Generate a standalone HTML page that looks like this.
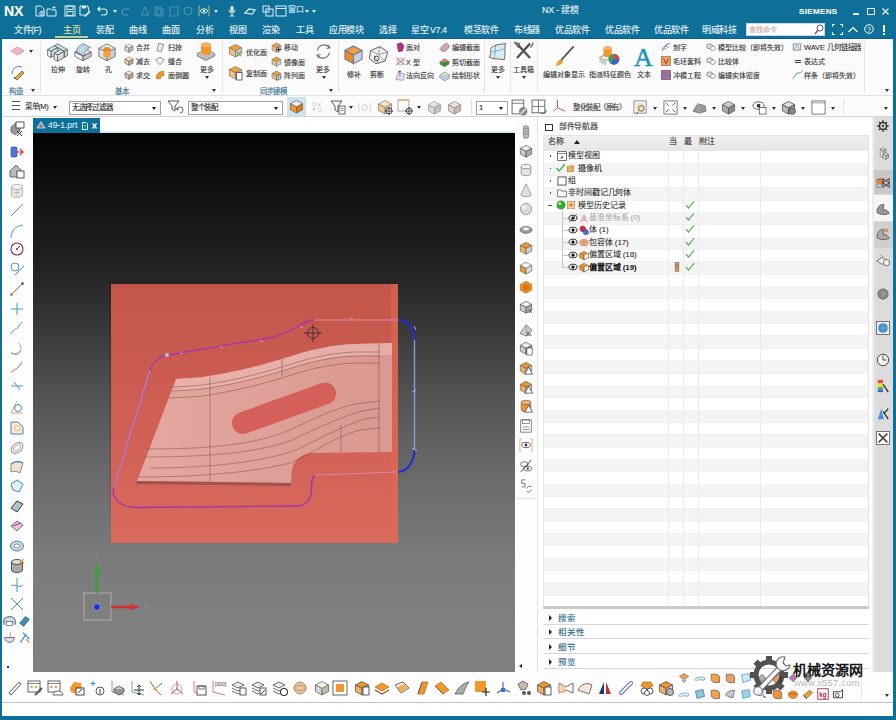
<!DOCTYPE html>
<html lang="zh-CN"><head><meta charset="utf-8">
<style>
*{margin:0;padding:0;box-sizing:border-box}
html,body{width:896px;height:720px;overflow:hidden;background:#fff;font-family:"Liberation Sans",sans-serif;position:relative}
.a{position:absolute}
.t{white-space:nowrap;-webkit-text-stroke:.12px currentColor}
svg{position:absolute;overflow:visible}
</style></head><body>
<div class="a" style="left:0px;top:0px;width:896px;height:39px;background:#0e6f98;"></div>
<div class="a" style="left:0px;top:38px;width:896px;height:1px;background:#0b6088;"></div>
<div class="a t" style="left:4px;top:3px;font-size:14px;line-height:16px;color:#fff;font-weight:bold">NX</div>
<svg style="left:34px;top:5px;opacity:1" width="12" height="12" viewBox="0 0 12 12"><path d="M2 1h5l3 3v7H2z" fill="none" stroke="#dceef6" stroke-width="1"/><circle cx="8" cy="8.5" r="2.3" fill="#0e6f98" stroke="#dceef6"/><path d="M8 7v3M6.8 8.5h2.4" stroke="#dceef6" stroke-width=".8"/></svg>
<svg style="left:46px;top:5px;opacity:1" width="12" height="12" viewBox="0 0 12 12"><path d="M1 4h4l1 1h4v6H1z" fill="none" stroke="#dceef6"/><path d="M8 1v3M6.5 2.5h3" stroke="#dceef6"/></svg>
<svg style="left:64px;top:5px;opacity:1" width="12" height="12" viewBox="0 0 12 12"><rect x="1" y="1" width="10" height="10" fill="none" stroke="#dceef6"/><rect x="3" y="1" width="6" height="3.5" fill="none" stroke="#dceef6"/><rect x="3" y="6.5" width="6" height="4" fill="none" stroke="#dceef6"/></svg>
<svg style="left:79px;top:5px;opacity:1" width="12" height="12" viewBox="0 0 12 12"><path d="M1 1h7l1.5 1.5V6M6 10H1V1" fill="none" stroke="#dceef6" stroke-width="1.1"/><rect x="3" y="1" width="4" height="2.5" fill="#dceef6"/><path d="M5.5 10.5l5-5 1.2 1.2-5 5H5.5z" fill="#dceef6"/></svg>
<svg style="left:96px;top:5px;opacity:1" width="12" height="12" viewBox="0 0 12 12"><path d="M3 4h5a3 3 0 0 1 0 6H5" fill="none" stroke="#dceef6" stroke-width="1.1"/><path d="M1 4l3-3v6z" fill="#dceef6"/></svg>
<div class="a" style="left:113px;top:10px;width:0;height:0;border-left:2px solid transparent;border-right:2px solid transparent;border-top:3px solid #dceef6"></div>
<svg style="left:121px;top:5px;opacity:0.35" width="12" height="12" viewBox="0 0 12 12"><path d="M9 4H4a3 3 0 0 0 0 6h3" fill="none" stroke="#dceef6" stroke-width="1"/></svg>
<svg style="left:139px;top:5px;opacity:0.3" width="12" height="12" viewBox="0 0 12 12"><path d="M2 10l4-8 4 8z" fill="none" stroke="#dceef6"/></svg>
<svg style="left:153px;top:5px;opacity:0.3" width="12" height="12" viewBox="0 0 12 12"><rect x="2" y="2" width="6" height="8" fill="none" stroke="#dceef6"/><rect x="4" y="4" width="6" height="7" fill="none" stroke="#dceef6"/></svg>
<svg style="left:168px;top:5px;opacity:0.3" width="12" height="12" viewBox="0 0 12 12"><rect x="2" y="2" width="8" height="9" fill="none" stroke="#dceef6"/></svg>
<svg style="left:182px;top:5px;opacity:0.3" width="12" height="12" viewBox="0 0 12 12"><circle cx="6" cy="6" r="4" fill="none" stroke="#dceef6"/></svg>
<svg style="left:198px;top:5px;opacity:1" width="12" height="12" viewBox="0 0 12 12"><path d="M2 1H1v10h1M10 1h1v10h-1" fill="none" stroke="#c8b060"/><ellipse cx="6" cy="6" rx="3.5" ry="2.2" fill="none" stroke="#dceef6"/><circle cx="6" cy="6" r="1.2" fill="#dceef6"/></svg>
<div class="a" style="left:214px;top:10px;width:0;height:0;border-left:2px solid transparent;border-right:2px solid transparent;border-top:3px solid #dceef6"></div>
<svg style="left:226px;top:5px;opacity:1" width="12" height="12" viewBox="0 0 12 12"><rect x="4.5" y="1" width="3" height="6" rx="1.5" fill="#dceef6"/><path d="M3 5a3 3 0 0 0 6 0M6 8v3M4 11h4" fill="none" stroke="#dceef6"/></svg>
<svg style="left:244px;top:5px;opacity:1" width="12" height="12" viewBox="0 0 12 12"><path d="M1 8l4-4 6 1-3 4z" fill="none" stroke="#dceef6" stroke-width="1.2"/></svg>
<svg style="left:262px;top:5px;opacity:1" width="12" height="12" viewBox="0 0 12 12"><rect x="1" y="1" width="6" height="6" fill="none" stroke="#dceef6"/><rect x="4" y="4" width="7" height="7" fill="none" stroke="#dceef6"/></svg>
<svg style="left:275px;top:5px;opacity:1" width="12" height="12" viewBox="0 0 12 12"><rect x="1" y="1" width="10" height="10" fill="none" stroke="#dceef6"/><path d="M1 3.5h10" stroke="#dceef6"/></svg>
<div class="a t" style="left:288px;top:5px;font-size:8px;line-height:10px;color:#dceef6;letter-spacing:-0.5px">窗口</div>
<div class="a" style="left:305px;top:10px;width:0;height:0;border-left:2px solid transparent;border-right:2px solid transparent;border-top:3px solid #dceef6"></div>
<div class="a" style="left:312px;top:10px;width:0;height:0;border-left:2px solid transparent;border-right:2px solid transparent;border-top:3px solid #dceef6"></div>
<div class="a t" style="left:542px;top:5px;font-size:9px;line-height:11px;color:#e6f0f5;letter-spacing:-0.3px">NX - 建模</div>
<div class="a t" style="left:799px;top:6.5px;font-size:8px;line-height:10px;color:#f4f8fa;font-weight:bold;letter-spacing:0.35px">SIEMENS</div>
<div class="a" style="left:853px;top:13px;width:6px;height:1.6px;background:#eef;"></div>
<div class="a" style="left:867px;top:8px;width:8px;height:7px;border:1.2px solid #eef"></div>
<svg style="left:882px;top:8px" width="7" height="7" viewBox="0 0 7 7"><path d="M0.5 0.5L6.5 6.5M6.5 0.5L0.5 6.5" stroke="#eef" stroke-width="1.3"/></svg>
<div class="a t" style="left:14px;top:25px;font-size:9px;line-height:11px;color:#e8f2f7;letter-spacing:-0.5px">文件(F)</div>
<div class="a t" style="left:63px;top:25px;font-size:9px;line-height:11px;color:#e3e39a;letter-spacing:-0.5px">主页</div>
<div class="a t" style="left:96px;top:25px;font-size:9px;line-height:11px;color:#e8f2f7;letter-spacing:-0.5px">装配</div>
<div class="a t" style="left:129px;top:25px;font-size:9px;line-height:11px;color:#e8f2f7;letter-spacing:-0.5px">曲线</div>
<div class="a t" style="left:162px;top:25px;font-size:9px;line-height:11px;color:#e8f2f7;letter-spacing:-0.5px">曲面</div>
<div class="a t" style="left:196px;top:25px;font-size:9px;line-height:11px;color:#e8f2f7;letter-spacing:-0.5px">分析</div>
<div class="a t" style="left:229px;top:25px;font-size:9px;line-height:11px;color:#e8f2f7;letter-spacing:-0.5px">视图</div>
<div class="a t" style="left:262px;top:25px;font-size:9px;line-height:11px;color:#e8f2f7;letter-spacing:-0.5px">渲染</div>
<div class="a t" style="left:296px;top:25px;font-size:9px;line-height:11px;color:#e8f2f7;letter-spacing:-0.5px">工具</div>
<div class="a t" style="left:329px;top:25px;font-size:9px;line-height:11px;color:#e8f2f7;letter-spacing:-0.5px">应用模块</div>
<div class="a t" style="left:379px;top:25px;font-size:9px;line-height:11px;color:#e8f2f7;letter-spacing:-0.5px">选择</div>
<div class="a t" style="left:411px;top:25px;font-size:9px;line-height:11px;color:#e8f2f7;letter-spacing:-0.5px">星空 V7.4</div>
<div class="a t" style="left:464px;top:25px;font-size:9px;line-height:11px;color:#e8f2f7;letter-spacing:-0.5px">模茎软件</div>
<div class="a t" style="left:514px;top:25px;font-size:9px;line-height:11px;color:#e8f2f7;letter-spacing:-0.5px">布线器</div>
<div class="a t" style="left:555px;top:25px;font-size:9px;line-height:11px;color:#e8f2f7;letter-spacing:-0.5px">优品软件</div>
<div class="a t" style="left:605px;top:25px;font-size:9px;line-height:11px;color:#e8f2f7;letter-spacing:-0.5px">优品软件</div>
<div class="a t" style="left:654px;top:25px;font-size:9px;line-height:11px;color:#e8f2f7;letter-spacing:-0.5px">优品软件</div>
<div class="a t" style="left:702px;top:25px;font-size:9px;line-height:11px;color:#e8f2f7;letter-spacing:-0.5px">明威科技</div>
<div class="a" style="left:55px;top:36px;width:33px;height:2px;background:#bccf9a;"></div>
<div class="a" style="left:746px;top:23px;width:79px;height:13px;background:#fff;border:1px solid #cfd8dc"></div>
<div class="a t" style="left:749px;top:25px;font-size:7px;line-height:9px;color:#c9aaa0;">查找命令</div>
<svg style="left:814px;top:24px" width="10" height="11" viewBox="0 0 10 11"><circle cx="6" cy="4" r="3" fill="none" stroke="#555" stroke-width="1"/><path d="M4 6L1 10" stroke="#a05050" stroke-width="1.5"/></svg>
<svg style="left:832px;top:24px" width="11" height="11" viewBox="0 0 11 11"><path d="M0.5 3V0.5H3M8 0.5h2.5V3M10.5 8v2.5H8M3 10.5H0.5V8" fill="none" stroke="#dff" stroke-width="1.1"/></svg>
<svg style="left:848px;top:26px" width="10" height="7" viewBox="0 0 10 7"><path d="M0.5 6L5 1.5 9.5 6" fill="none" stroke="#fff" stroke-width="1.2"/></svg>
<svg style="left:864px;top:24px" width="10" height="10" viewBox="0 0 10 10"><circle cx="5" cy="5" r="4.3" fill="none" stroke="#fff" stroke-width="1"/><text x="5" y="8" font-size="7" text-anchor="middle" fill="#fff" font-family="Liberation Sans">?</text></svg>
<div class="a" style="left:883px;top:25px;width:1.6px;height:7px;background:#fff;"></div>
<div class="a" style="left:883px;top:33px;width:1.6px;height:1.6px;background:#fff;"></div>
<div class="a" style="left:2px;top:39px;width:891px;height:57px;background:#fbfbfb;"></div>
<div class="a" style="left:2px;top:95px;width:891px;height:1px;background:#e0e0e0;"></div>
<div class="a" style="left:40px;top:41px;width:1px;height:52px;background:#e4e4e4;"></div>
<div class="a" style="left:222px;top:41px;width:1px;height:52px;background:#e4e4e4;"></div>
<div class="a" style="left:338px;top:41px;width:1px;height:52px;background:#e4e4e4;"></div>
<div class="a" style="left:484px;top:41px;width:1px;height:52px;background:#e4e4e4;"></div>
<div class="a" style="left:510px;top:41px;width:1px;height:52px;background:#e4e4e4;"></div>
<div class="a" style="left:537px;top:41px;width:1px;height:52px;background:#e4e4e4;"></div>
<div class="a" style="left:864px;top:41px;width:1px;height:52px;background:#e4e4e4;"></div>
<svg style="left:10px;top:46px" width="15" height="10" viewBox="0 0 15 10"><path d="M1 5L7.5 1 14 5 7.5 9z" fill="#f2b5c8" stroke="#d48aa0" stroke-width=".8"/></svg>
<div class="a" style="left:29px;top:50px;width:0;height:0;border-left:2px solid transparent;border-right:2px solid transparent;border-top:3px solid #333"></div>
<svg style="left:10px;top:64px" width="15" height="16" viewBox="0 0 15 16"><path d="M2 10A7 7 0 0 1 12 3" fill="none" stroke="#3a8fb5" stroke-width="1"/><path d="M5 14l7-7 2 2-7 7z" fill="#f5a623" stroke="#555" stroke-width=".7"/><path d="M4 13l1.5 2" stroke="#333"/></svg>
<div class="a t" style="left:9px;top:87px;font-size:7.5px;line-height:9.5px;color:#2d6f92;">构造</div>
<div class="a" style="left:31px;top:89px;width:0;height:0;border-left:2px solid transparent;border-right:2px solid transparent;border-top:3px solid #333"></div>
<svg style="left:47px;top:42px" width="21" height="21" viewBox="0 0 16 16"><polygon points="8.00,1.36 15.53,5.71 13.02,7.16 5.49,2.81" fill="#c8e6ef" stroke="#555" stroke-width="0.6" stroke-linejoin="round"/><polygon points="15.53,5.71 13.02,7.16 13.02,11.80 15.53,10.35" fill="#d4dadd" stroke="#555" stroke-width="0.6" stroke-linejoin="round"/><polygon points="5.49,2.81 13.02,7.16 13.02,11.80 5.49,7.45" fill="#f2f5f6" stroke="#555" stroke-width="0.6" stroke-linejoin="round"/><polygon points="5.49,2.81 8.00,4.26 2.98,7.16 0.47,5.71" fill="#c8e6ef" stroke="#555" stroke-width="0.6" stroke-linejoin="round"/><polygon points="8.00,4.26 2.98,7.16 2.98,11.80 8.00,8.90" fill="#d4dadd" stroke="#555" stroke-width="0.6" stroke-linejoin="round"/><polygon points="0.47,5.71 2.98,7.16 2.98,11.80 0.47,10.35" fill="#f2f5f6" stroke="#555" stroke-width="0.6" stroke-linejoin="round"/><polygon points="10.51,5.71 13.02,7.16 8.00,10.06 5.49,8.61" fill="#c8e6ef" stroke="#555" stroke-width="0.6" stroke-linejoin="round"/><polygon points="13.02,7.16 8.00,10.06 8.00,14.70 13.02,11.80" fill="#d4dadd" stroke="#555" stroke-width="0.6" stroke-linejoin="round"/><polygon points="5.49,8.61 8.00,10.06 8.00,14.70 5.49,13.25" fill="#f2f5f6" stroke="#555" stroke-width="0.6" stroke-linejoin="round"/></svg>
<div class="a t" style="left:51px;top:65px;font-size:7px;line-height:9px;color:#333;letter-spacing:0px">拉伸</div>
<svg style="left:73px;top:42px" width="20" height="20" viewBox="0 0 16 16"><path d="M1.5 8 L8 4.5 L14.5 8 L8 11.5Z" fill="#e8e8e8" stroke="#555" stroke-width=".6"/><path d="M1.5 8V11.5L8 15V11.5z" fill="#f4f4f4" stroke="#555" stroke-width=".6"/><path d="M14.5 8V11.5L8 15V11.5z" fill="#c8c8c8" stroke="#555" stroke-width=".6"/><path d="M3 8 C3 4 6 2 8.5 1.5 L14 4.5 C11.5 5 9 7 9 11 z" fill="#cfe8f0" stroke="#557" stroke-width=".6"/><path d="M5 7C5 5 7 3.5 9.5 3M7 9C7 6.5 9 5 11.5 4.3" fill="none" stroke="#6ab" stroke-width=".6"/></svg>
<div class="a t" style="left:76px;top:65px;font-size:7px;line-height:9px;color:#333;letter-spacing:0px">旋转</div>
<svg style="left:97px;top:42px" width="20" height="20" viewBox="0 0 16 16"><path d="M8 1.5 L14.5 5 L8 8.5 L1.5 5Z" fill="#eef3f5" stroke="#777" stroke-width=".8"/><path d="M1.5 5 L8 8.5 L8 15 L1.5 11.5Z" fill="#dfe7ea" stroke="#777" stroke-width=".8"/><path d="M14.5 5 L8 8.5 L8 15 L14.5 11.5Z" fill="#c9d2d6" stroke="#777" stroke-width=".8"/><path d="M5 5.5V11A3 1.6 0 0 0 11 11V5.5" fill="#f0a050"/><ellipse cx="8" cy="5.5" rx="3" ry="1.6" fill="#e58a20"/></svg>
<div class="a t" style="left:105px;top:65px;font-size:7px;line-height:9px;color:#333;letter-spacing:0px">孔</div>
<svg style="left:124px;top:43px" width="10" height="10" viewBox="0 0 16 16"><path d="M8 1.5 L14.5 5 L8 8.5 L1.5 5Z" fill="#f0f0f0" stroke="#555" stroke-width=".8"/><path d="M1.5 5 L8 8.5 L8 15 L1.5 11.5Z" fill="#ddd" stroke="#555" stroke-width=".8"/><path d="M14.5 5 L8 8.5 L8 15 L14.5 11.5Z" fill="#bbb" stroke="#555" stroke-width=".8"/></svg>
<div class="a t" style="left:136px;top:43px;font-size:7px;line-height:9px;color:#333;letter-spacing:0px">合并</div>
<svg style="left:124px;top:56px" width="10" height="10" viewBox="0 0 16 16"><path d="M8 1.5 L14.5 5 L8 8.5 L1.5 5Z" fill="#f7e8d8" stroke="#555" stroke-width=".8"/><path d="M1.5 5 L8 8.5 L8 15 L1.5 11.5Z" fill="#e8c9a8" stroke="#555" stroke-width=".8"/><path d="M14.5 5 L8 8.5 L8 15 L14.5 11.5Z" fill="#c9a080" stroke="#555" stroke-width=".8"/></svg>
<div class="a t" style="left:136px;top:57px;font-size:7px;line-height:9px;color:#333;letter-spacing:0px">减去</div>
<svg style="left:124px;top:70px" width="10" height="10" viewBox="0 0 16 16"><path d="M8 1.5 L14.5 5 L8 8.5 L1.5 5Z" fill="#f5e6dc" stroke="#555" stroke-width=".8"/><path d="M1.5 5 L8 8.5 L8 15 L1.5 11.5Z" fill="#e0c0b0" stroke="#555" stroke-width=".8"/><path d="M14.5 5 L8 8.5 L8 15 L14.5 11.5Z" fill="#c8a090" stroke="#555" stroke-width=".8"/></svg>
<div class="a t" style="left:136px;top:71px;font-size:7px;line-height:9px;color:#333;letter-spacing:0px">求交</div>
<svg style="left:155px;top:42px" width="10" height="10" viewBox="0 0 16 16"><path d="M3 14L6 2 14 4 10 15z" fill="#e4f0f5" stroke="#557" stroke-width="1"/></svg>
<div class="a t" style="left:168px;top:43px;font-size:7px;line-height:9px;color:#333;letter-spacing:0px">扫掠</div>
<svg style="left:155px;top:56px" width="10" height="10" viewBox="0 0 16 16"><path d="M1 6L8 2 15 6 8 14z" fill="#f4f4f4" stroke="#555" stroke-width="1"/></svg>
<div class="a t" style="left:168px;top:57px;font-size:7px;line-height:9px;color:#333;letter-spacing:0px">缝合</div>
<svg style="left:155px;top:70px" width="10" height="10" viewBox="0 0 16 16"><path d="M2 14C2 6 6 2 14 2V9C10 9 9 11 9 14z" fill="#f0962a" stroke="#a05a10" stroke-width=".8"/></svg>
<div class="a t" style="left:168px;top:71px;font-size:7px;line-height:9px;color:#333;letter-spacing:0px">面倒圆</div>
<svg style="left:196px;top:41px" width="20" height="20" viewBox="0 0 16 16"><path d="M1 10L8 6.5 15 10 8 13.5z" fill="#e0e0e0" stroke="#666" stroke-width=".6"/><path d="M1 10V12L8 15.5 15 12V10" fill="#bbb" stroke="#666" stroke-width=".6"/><path d="M4 3V9A4 2 0 0 0 12 9V3" fill="#f0962a"/><ellipse cx="8" cy="3" rx="4" ry="2" fill="#f7b060"/></svg>
<div class="a t" style="left:200px;top:65px;font-size:7px;line-height:9px;color:#333;letter-spacing:0px">更多</div>
<div class="a" style="left:205px;top:76px;width:0;height:0;border-left:2px solid transparent;border-right:2px solid transparent;border-top:3px solid #333"></div>
<div class="a t" style="left:115px;top:87px;font-size:7.5px;line-height:9.5px;color:#2d6f92;">基本</div>
<div class="a" style="left:212px;top:89px;width:0;height:0;border-left:2px solid transparent;border-right:2px solid transparent;border-top:3px solid #333"></div>
<svg style="left:228px;top:43px" width="15" height="15" viewBox="0 0 16 16"><path d="M8 1.5 L14.5 5 L8 8.5 L1.5 5Z" fill="#f5a030" stroke="#777" stroke-width=".8"/><path d="M1.5 5 L8 8.5 L8 15 L1.5 11.5Z" fill="#f0c080" stroke="#777" stroke-width=".8"/><path d="M14.5 5 L8 8.5 L8 15 L14.5 11.5Z" fill="#d0d0e0" stroke="#777" stroke-width=".8"/><path d="M9 9l5 5M14 9l-5 5" stroke="#6a4" stroke-width="1.2"/></svg>
<div class="a t" style="left:246px;top:48px;font-size:7px;line-height:9px;color:#333;letter-spacing:0px">优化面</div>
<svg style="left:228px;top:65px" width="15" height="15" viewBox="0 0 16 16"><path d="M8 1.5 L14.5 5 L8 8.5 L1.5 5Z" fill="#f5a030" stroke="#777" stroke-width=".8"/><path d="M1.5 5 L8 8.5 L8 15 L1.5 11.5Z" fill="#f0c080" stroke="#777" stroke-width=".8"/><path d="M14.5 5 L8 8.5 L8 15 L14.5 11.5Z" fill="#d0d0e0" stroke="#777" stroke-width=".8"/><path d="M9 8h6v8H9z" fill="#fff" stroke="#333" stroke-width=".8"/></svg>
<div class="a t" style="left:246px;top:69px;font-size:7px;line-height:9px;color:#333;letter-spacing:0px">复制面</div>
<svg style="left:271px;top:42px" width="11" height="11" viewBox="0 0 16 16"><path d="M8 1.5 L14.5 5 L8 8.5 L1.5 5Z" fill="#f5a030" stroke="#666" stroke-width=".8"/><path d="M1.5 5 L8 8.5 L8 15 L1.5 11.5Z" fill="#f0c080" stroke="#666" stroke-width=".8"/><path d="M14.5 5 L8 8.5 L8 15 L14.5 11.5Z" fill="#d0d0d0" stroke="#666" stroke-width=".8"/><path d="M11 7v8M7 11h8" stroke="#333" stroke-width="1.4"/></svg>
<div class="a t" style="left:284px;top:43px;font-size:7px;line-height:9px;color:#333;letter-spacing:0px">移动</div>
<svg style="left:271px;top:56px" width="11" height="11" viewBox="0 0 16 16"><path d="M8 1.5 L14.5 5 L8 8.5 L1.5 5Z" fill="#f5a030" stroke="#666" stroke-width=".8"/><path d="M1.5 5 L8 8.5 L8 15 L1.5 11.5Z" fill="#f0c080" stroke="#666" stroke-width=".8"/><path d="M14.5 5 L8 8.5 L8 15 L14.5 11.5Z" fill="#d0d0d0" stroke="#666" stroke-width=".8"/></svg>
<div class="a t" style="left:284px;top:58px;font-size:7px;line-height:9px;color:#333;letter-spacing:0px">镜像面</div>
<svg style="left:271px;top:70px" width="11" height="11" viewBox="0 0 16 16"><path d="M8 1.5 L14.5 5 L8 8.5 L1.5 5Z" fill="#f5a030" stroke="#666" stroke-width=".8"/><path d="M1.5 5 L8 8.5 L8 15 L1.5 11.5Z" fill="#f0c080" stroke="#666" stroke-width=".8"/><path d="M14.5 5 L8 8.5 L8 15 L14.5 11.5Z" fill="#d0d0d0" stroke="#666" stroke-width=".8"/><circle cx="11" cy="11" r="3.5" fill="#fff" stroke="#333" stroke-width=".8"/><path d="M11 7.5v7M7.5 11h7" stroke="#333" stroke-width=".6"/></svg>
<div class="a t" style="left:284px;top:71px;font-size:7px;line-height:9px;color:#333;letter-spacing:0px">阵列面</div>
<svg style="left:314px;top:42px" width="19" height="19" viewBox="0 0 16 16"><path d="M3 7A5.5 5.5 0 0 1 13 5" fill="none" stroke="#777" stroke-width="1"/><path d="M13 9A5.5 5.5 0 0 1 3 11" fill="none" stroke="#777" stroke-width="1"/><path d="M11.5 2.5l2 2.5-3 .5M4.5 13.5l-2-2.5 3-.5" fill="none" stroke="#777" stroke-width="1"/></svg>
<div class="a t" style="left:316px;top:65px;font-size:7px;line-height:9px;color:#333;letter-spacing:0px">更多</div>
<div class="a" style="left:322px;top:76px;width:0;height:0;border-left:2px solid transparent;border-right:2px solid transparent;border-top:3px solid #333"></div>
<div class="a t" style="left:260px;top:87px;font-size:7.5px;line-height:9.5px;color:#2d6f92;letter-spacing:-0.3px">同步建模</div>
<div class="a" style="left:329px;top:89px;width:0;height:0;border-left:2px solid transparent;border-right:2px solid transparent;border-top:3px solid #333"></div>
<svg style="left:343px;top:44px" width="21" height="21" viewBox="0 0 16 16"><path d="M8 1.5 L14.5 5 L8 8.5 L1.5 5Z" fill="#f5a040" stroke="#6a7a9a" stroke-width=".8"/><path d="M1.5 5 L8 8.5 L8 15 L1.5 11.5Z" fill="#ec8a20" stroke="#6a7a9a" stroke-width=".8"/><path d="M14.5 5 L8 8.5 L8 15 L14.5 11.5Z" fill="#c8d0e8" stroke="#6a7a9a" stroke-width=".8"/></svg>
<div class="a t" style="left:347px;top:70px;font-size:7px;line-height:9px;color:#333;letter-spacing:0px">修补</div>
<svg style="left:368px;top:44px" width="21" height="21" viewBox="0 0 16 16"><path d="M2 5L9 2 15 6 13 13 6 15 1 11z" fill="#f2f2f2" stroke="#555" stroke-width=".7"/><path d="M2 5L8 8 13 13M8 8L15 6M5 9l3 6M9 2l-1 6" fill="none" stroke="#777" stroke-width=".5"/><circle cx="6.5" cy="11" r="1.8" fill="none" stroke="#333" stroke-width=".7"/></svg>
<div class="a t" style="left:370px;top:70px;font-size:7px;line-height:9px;color:#333;letter-spacing:0px">剪断</div>
<svg style="left:395px;top:42px" width="11" height="11" viewBox="0 0 16 16"><path d="M3 3L9 1 13 5 11 13 5 14z" fill="#b0308a" stroke="#702060" stroke-width=".8"/></svg>
<div class="a t" style="left:406px;top:43px;font-size:7px;line-height:9px;color:#333;letter-spacing:0px">面对</div>
<svg style="left:395px;top:56px" width="11" height="11" viewBox="0 0 16 16"><path d="M2 3l12 10M14 3L2 13" stroke="#b04060" stroke-width="1.3"/><circle cx="8" cy="8" r="5" fill="none" stroke="#888" stroke-width=".8"/></svg>
<div class="a t" style="left:406px;top:58px;font-size:7px;line-height:9px;color:#333;letter-spacing:0px">X 型</div>
<svg style="left:395px;top:70px" width="11" height="11" viewBox="0 0 16 16"><path d="M1 14L5 3 14 6 12 15z" fill="#dde" stroke="#666" stroke-width=".7"/><path d="M7 9V1M5 3l2-2 2 2" stroke="#b04060" stroke-width="1"/></svg>
<div class="a t" style="left:406px;top:71px;font-size:7px;line-height:9px;color:#333;letter-spacing:0px">法向反向</div>
<svg style="left:439px;top:42px" width="11" height="11" viewBox="0 0 16 16"><path d="M1 10L8 3 15 7 9 14z" fill="#ccc" stroke="#555" stroke-width=".8"/><path d="M11 1L15 5 7 13 4 14 5 10z" fill="#f0a0c0" stroke="#555" stroke-width=".6"/></svg>
<div class="a t" style="left:452px;top:43px;font-size:7px;line-height:9px;color:#333;letter-spacing:0px">编辑截面</div>
<svg style="left:439px;top:56px" width="11" height="11" viewBox="0 0 16 16"><path d="M1 9L8 4 15 8 8 13z" fill="#e48080" stroke="#555" stroke-width=".8"/><path d="M1 9V12L8 16 15 12V8" fill="#3a8a4a"/></svg>
<div class="a t" style="left:452px;top:58px;font-size:7px;line-height:9px;color:#333;letter-spacing:0px">剪切截面</div>
<svg style="left:439px;top:70px" width="11" height="11" viewBox="0 0 16 16"><path d="M1 8L8 3 15 7 8 12z" fill="#d8ecd8" stroke="#555" stroke-width=".8"/><path d="M1 8v3l7 5 7-4V7" fill="#bcd" stroke="#555" stroke-width=".6"/></svg>
<div class="a t" style="left:452px;top:71px;font-size:7px;line-height:9px;color:#333;letter-spacing:0px">绘制形状</div>
<svg style="left:488px;top:41px" width="20" height="20" viewBox="0 0 16 16"><path d="M2 6C6 2 10 3 14 2 13 8 14 12 13 15 9 14 5 15 1 13 3 10 2 8 2 6z" fill="#d6ecf4" stroke="#555" stroke-width=".7"/><path d="M3 9C7 7 10 8 13 6M5 13C6 9 6 5 6 3" fill="none" stroke="#48a" stroke-width=".5"/></svg>
<div class="a t" style="left:491px;top:65px;font-size:7px;line-height:9px;color:#333;letter-spacing:0px">更多</div>
<div class="a" style="left:496px;top:76px;width:0;height:0;border-left:2px solid transparent;border-right:2px solid transparent;border-top:3px solid #333"></div>
<svg style="left:513px;top:41px" width="21" height="21" viewBox="0 0 16 16"><path d="M3 2l10 11M13 2L3 13" stroke="#555" stroke-width="1.8"/><path d="M1 1l4 1-1 3zM15 1a3 3 0 0 1-2 4" fill="#888" stroke="#555" stroke-width=".7"/></svg>
<div class="a t" style="left:513px;top:65px;font-size:7px;line-height:9px;color:#333;letter-spacing:0px">工具箱</div>
<div class="a" style="left:522px;top:76px;width:0;height:0;border-left:2px solid transparent;border-right:2px solid transparent;border-top:3px solid #333"></div>
<svg style="left:553px;top:45px" width="22" height="22" viewBox="0 0 16 16"><path d="M2 15C3 11 5 10 7 11 8 13 5 15 2 15z" fill="#e8a030"/><path d="M6 11L15 1" stroke="#555" stroke-width="1.3"/></svg>
<div class="a t" style="left:543px;top:70px;font-size:7px;line-height:9px;color:#333;letter-spacing:0px">编辑对象显示</div>
<svg style="left:598px;top:44px" width="22" height="22" viewBox="0 0 16 16"><path d="M1 10L6 7 11 9 6 12z" fill="#eee" stroke="#666" stroke-width=".5"/><path d="M1 10v3l5 3V12z" fill="#ccc"/><path d="M4 3V8A3 1.5 0 0 0 10 8V3" fill="#f0962a"/><ellipse cx="7" cy="3" rx="3" ry="1.5" fill="#f5b060"/><circle cx="11.5" cy="11" r="4" fill="#40a050"/><path d="M11.5 11V7A4 4 0 0 1 15.5 11z" fill="#e04040"/><path d="M11.5 11H15.5A4 4 0 0 1 9 14z" fill="#4060d0"/></svg>
<div class="a t" style="left:589px;top:70px;font-size:7px;line-height:9px;color:#333;letter-spacing:0px">指派特征颜色</div>
<div class="a t" style="left:634px;top:43.5px;font-size:26px;line-height:28px;color:#1a94b8;font-family:'Liberation Serif',serif;line-height:28px;-webkit-text-stroke:.5px currentColor">A</div>
<div class="a t" style="left:637px;top:70px;font-size:7px;line-height:9px;color:#333;letter-spacing:0px">文本</div>
<svg style="left:661px;top:42px" width="10" height="10" viewBox="0 0 16 16"><path d="M2 14C4 8 8 4 14 2M5 9l3 3M8 6l3 3" stroke="#7040a0" stroke-width="1.5" fill="none"/></svg>
<div class="a t" style="left:673px;top:43px;font-size:7px;line-height:9px;color:#333;letter-spacing:0px">刻字</div>
<svg style="left:661px;top:56px" width="10" height="10" viewBox="0 0 16 16"><rect x="1" y="1" width="14" height="14" fill="#f0a060" stroke="#905030"/><path d="M4 4l4 8 4-8" fill="none" stroke="#702020" stroke-width="1.3"/></svg>
<div class="a t" style="left:673px;top:57px;font-size:7px;line-height:9px;color:#333;letter-spacing:0px">毛坯套料</div>
<svg style="left:661px;top:70px" width="10" height="10" viewBox="0 0 16 16"><rect x="1" y="1" width="14" height="14" fill="#e06060" stroke="#4060a0" stroke-width="1.4"/><path d="M4 4h8v8H4z" fill="#6080d0"/></svg>
<div class="a t" style="left:673px;top:71px;font-size:7px;line-height:9px;color:#333;letter-spacing:0px">冲模工程</div>
<svg style="left:706px;top:42px" width="10" height="10" viewBox="0 0 16 16"><ellipse cx="6" cy="7" rx="5" ry="4" fill="#ddd" stroke="#555" stroke-width=".9"/><ellipse cx="11" cy="10" rx="4" ry="3.5" fill="#fff" stroke="#555" stroke-width=".9"/></svg>
<svg style="left:706px;top:56px" width="10" height="10" viewBox="0 0 16 16"><ellipse cx="6" cy="7" rx="5" ry="4" fill="#ddd" stroke="#555" stroke-width=".9"/><ellipse cx="11" cy="10" rx="4" ry="3.5" fill="#fff" stroke="#555" stroke-width=".9"/></svg>
<svg style="left:706px;top:70px" width="10" height="10" viewBox="0 0 16 16"><ellipse cx="6" cy="7" rx="5" ry="4" fill="#ddd" stroke="#555" stroke-width=".9"/><ellipse cx="11" cy="10" rx="4" ry="3.5" fill="#fff" stroke="#555" stroke-width=".9"/></svg>
<div class="a t" style="left:718px;top:43px;font-size:7px;line-height:9px;color:#333;letter-spacing:0px">模型比较（即将失效）</div>
<div class="a t" style="left:718px;top:57px;font-size:7px;line-height:9px;color:#333;letter-spacing:0px">比较体</div>
<div class="a t" style="left:718px;top:71px;font-size:7px;line-height:9px;color:#333;letter-spacing:0px">编辑实体密度</div>
<svg style="left:792px;top:42px" width="10" height="10" viewBox="0 0 16 16"><path d="M2 3h12v10H2z" fill="#e8eef0" stroke="#555"/><path d="M4 11l4-6 4 6" fill="none" stroke="#48a"/></svg>
<div class="a t" style="left:804px;top:43px;font-size:7.5px;line-height:9.5px;color:#333;letter-spacing:-0.1px">WAVE 几何链接器</div>
<div class="a" style="left:795px;top:60px;width:6px;height:1px;background:#444;"></div>
<div class="a" style="left:795px;top:62px;width:6px;height:1px;background:#444;"></div>
<div class="a t" style="left:804px;top:57px;font-size:7px;line-height:9px;color:#333;letter-spacing:0px">表达式</div>
<svg style="left:792px;top:70px" width="11" height="9" viewBox="0 0 11 9"><path d="M0.5 8.5C3 7 4 3 6 3S9 3 10.5 0.5" fill="none" stroke="#3a8fb5" stroke-width="1"/></svg>
<div class="a t" style="left:804px;top:71px;font-size:7px;line-height:9px;color:#333;letter-spacing:0px">样条（即将失效）</div>
<div class="a" style="left:885px;top:89px;width:0;height:0;border-left:2px solid transparent;border-right:2px solid transparent;border-top:3px solid #333"></div>
<div class="a" style="left:2px;top:96px;width:891px;height:21px;background:#fcfcfc;"></div>
<div class="a" style="left:2px;top:116px;width:891px;height:1px;background:#d4d4d4;"></div>
<div class="a" style="left:12px;top:101px;width:8px;height:1px;background:#555;"></div>
<div class="a" style="left:12px;top:105px;width:8px;height:1px;background:#555;"></div>
<div class="a" style="left:12px;top:109px;width:8px;height:1px;background:#555;"></div>
<div class="a t" style="left:25px;top:102px;font-size:7.5px;line-height:9.5px;color:#333;letter-spacing:-0.4px">菜单(M)</div>
<div class="a" style="left:53px;top:106px;width:0;height:0;border-left:2px solid transparent;border-right:2px solid transparent;border-top:3px solid #333"></div>
<div class="a" style="left:69px;top:101px;width:92px;height:14px;background:#fff;border:1px solid #a0a0a0"></div>
<div class="a t" style="left:72px;top:103px;font-size:7.5px;line-height:9.5px;color:#222;letter-spacing:-0.3px">无选择过滤器</div>
<div class="a" style="left:151.5px;top:107px;width:0;height:0;border-left:2.5px solid transparent;border-right:2.5px solid transparent;border-top:3.5px solid #111"></div>
<svg style="left:167px;top:99px" width="16" height="16" viewBox="0 0 16 16"><path d="M1 2h11L8 7v5L5 10V7z" fill="none" stroke="#444" stroke-width=".9"/><path d="M13 14a3 3 0 1 0-3-3" fill="none" stroke="#444" stroke-width=".8"/><path d="M9 9l1 2 2-1" fill="none" stroke="#444" stroke-width=".7"/></svg>
<div class="a" style="left:188px;top:101px;width:95px;height:14px;background:#fff;border:1px solid #a0a0a0"></div>
<div class="a t" style="left:191px;top:103px;font-size:7.5px;line-height:9.5px;color:#222;letter-spacing:-0.3px">整个装配</div>
<div class="a" style="left:273.5px;top:107px;width:0;height:0;border-left:2.5px solid transparent;border-right:2.5px solid transparent;border-top:3.5px solid #111"></div>
<div class="a" style="left:287px;top:97px;width:19px;height:19px;background:#cde4f0;"></div>
<svg style="left:289px;top:99px" width="15" height="15" viewBox="0 0 16 16"><path d="M8 1.5 L14.5 5 L8 8.5 L1.5 5Z" fill="#e8eef2" stroke="#666" stroke-width=".8"/><path d="M1.5 5 L8 8.5 L8 15 L1.5 11.5Z" fill="#f0962a" stroke="#666" stroke-width=".8"/><path d="M14.5 5 L8 8.5 L8 15 L14.5 11.5Z" fill="#e07a10" stroke="#666" stroke-width=".8"/></svg>
<svg style="left:310px;top:100px" width="14" height="14" viewBox="0 0 16 16"><path d="M3 12l3-3M9 7l3-3" stroke="#bbb" stroke-width="1.3"/><circle cx="5" cy="5" r="2" fill="none" stroke="#ccc"/><circle cx="11" cy="11" r="2" fill="none" stroke="#ccc"/></svg>
<svg style="left:330px;top:99px" width="19" height="16" viewBox="0 0 19 16"><path d="M1 2h11L8 7v6L5 11V7z" fill="none" stroke="#444" stroke-width=".9"/><rect x="9" y="7" width="6" height="8" fill="#fff" stroke="#444" stroke-width=".8"/><path d="M10.5 9.5h3M10.5 11.5h3" stroke="#444" stroke-width=".6"/></svg>
<div class="a" style="left:349px;top:106px;width:0;height:0;border-left:2px solid transparent;border-right:2px solid transparent;border-top:3px solid #333"></div>
<svg style="left:357px;top:100px" width="15" height="15" viewBox="0 0 16 16"><path d="M2 3v10M14 3v10" stroke="#ccc" stroke-width=".9"/><circle cx="8" cy="8" r="3" fill="none" stroke="#ccc"/></svg>
<svg style="left:377px;top:99px" width="16" height="16" viewBox="0 0 16 16"><path d="M8 1.5 L14.5 5 L8 8.5 L1.5 5Z" fill="#fbe0b0" stroke="#888" stroke-width=".8"/><path d="M1.5 5 L8 8.5 L8 15 L1.5 11.5Z" fill="#f5c890" stroke="#888" stroke-width=".8"/><path d="M14.5 5 L8 8.5 L8 15 L14.5 11.5Z" fill="#e0c0a0" stroke="#888" stroke-width=".8"/><circle cx="12" cy="12" r="3" fill="#fff" stroke="#222" stroke-width=".8"/><path d="M12 8v8M8 12h8" stroke="#222" stroke-width=".8"/></svg>
<svg style="left:397px;top:99px" width="16" height="16" viewBox="0 0 16 16"><rect x="1" y="1" width="11" height="11" fill="none" stroke="#999" stroke-width=".8"/><path d="M1 1h11" stroke="#e0a040" stroke-width="1"/><circle cx="12" cy="12" r="3" fill="#fff" stroke="#222" stroke-width=".8"/><path d="M12 8v8M8 12h8" stroke="#222" stroke-width=".8"/></svg>
<div class="a" style="left:417px;top:106px;width:0;height:0;border-left:2px solid transparent;border-right:2px solid transparent;border-top:3px solid #333"></div>
<svg style="left:427px;top:100px" width="15" height="15" viewBox="0 0 16 16"><path d="M8 1.5 L14.5 5 L8 8.5 L1.5 5Z" fill="#e8e8e8" stroke="#999" stroke-width=".8"/><path d="M1.5 5 L8 8.5 L8 15 L1.5 11.5Z" fill="#d8d8d8" stroke="#999" stroke-width=".8"/><path d="M14.5 5 L8 8.5 L8 15 L14.5 11.5Z" fill="#c0c0c0" stroke="#999" stroke-width=".8"/><path d="M3 8l10-3" stroke="#e0a080" stroke-width=".6"/></svg>
<svg style="left:447px;top:100px" width="15" height="15" viewBox="0 0 16 16"><path d="M8 1.5 L14.5 5 L8 8.5 L1.5 5Z" fill="#f0e0d8" stroke="#888" stroke-width=".8"/><path d="M1.5 5 L8 8.5 L8 15 L1.5 11.5Z" fill="#e0d0c8" stroke="#888" stroke-width=".8"/><path d="M14.5 5 L8 8.5 L8 15 L14.5 11.5Z" fill="#c8b8b0" stroke="#888" stroke-width=".8"/></svg>
<div class="a" style="left:471px;top:99px;width:1px;height:16px;background:#ddd;"></div>
<div class="a" style="left:476px;top:101px;width:32px;height:14px;background:#fff;border:1px solid #a0a0a0"></div>
<div class="a t" style="left:479px;top:103px;font-size:7.5px;line-height:9.5px;color:#222;letter-spacing:-0.3px">1</div>
<div class="a" style="left:498.5px;top:107px;width:0;height:0;border-left:2.5px solid transparent;border-right:2.5px solid transparent;border-top:3.5px solid #111"></div>
<svg style="left:511px;top:99px" width="17" height="17" viewBox="0 0 16 16"><rect x="1" y="1" width="11" height="13" fill="#fff" stroke="#555" stroke-width=".8"/><path d="M1 4h11" stroke="#555" stroke-width=".7"/><circle cx="11.5" cy="11.5" r="4" fill="#888"/><path d="M9 14l5-5" stroke="#fff" stroke-width="1"/></svg>
<svg style="left:531px;top:99px" width="17" height="17" viewBox="0 0 16 16"><rect x="1" y="1" width="12" height="12" fill="#fff" stroke="#555" stroke-width=".8"/><path d="M7 1v12M1 7h12" stroke="#555" stroke-width=".7"/><path d="M9 13a3 3 0 0 0 5-3" fill="none" stroke="#555" stroke-width=".9"/></svg>
<svg style="left:553px;top:99px" width="14" height="14" viewBox="0 0 16 16"><path d="M5 10V1M5 10l9 4M5 10L1 14" stroke="#d04060" stroke-width="1"/><path d="M5 10V1" stroke="#40a060" stroke-width="1"/></svg>
<div class="a t" style="left:573px;top:103px;font-size:7.5px;line-height:9.5px;color:#333;letter-spacing:-0.5px">整化装配（原有）</div>
<svg style="left:633px;top:100px" width="15" height="15" viewBox="0 0 16 16"><rect x="1" y="1" width="13" height="13" fill="#fff" stroke="#666" stroke-width=".8"/><rect x="3" y="3" width="9" height="9" fill="#f5e0c0"/><circle cx="9" cy="9" r="3" fill="none" stroke="#555"/><path d="M6 12l-3 3" stroke="#555"/></svg>
<div class="a" style="left:653px;top:107px;width:0;height:0;border-left:2px solid transparent;border-right:2px solid transparent;border-top:3px solid #333"></div>
<svg style="left:663px;top:100px" width="15" height="15" viewBox="0 0 16 16"><rect x="1" y="1" width="14" height="14" fill="#fff" stroke="#555" stroke-width=".8"/><path d="M3 3l3 3M13 3l-3 3M3 13l3-3M13 13l-3-3" stroke="#555" stroke-width="1"/></svg>
<div class="a" style="left:683px;top:107px;width:0;height:0;border-left:2px solid transparent;border-right:2px solid transparent;border-top:3px solid #333"></div>
<svg style="left:692px;top:100px" width="15" height="15" viewBox="0 0 16 16"><path d="M1 12L6 4 14 6 15 12 8 14z" fill="#999" stroke="#555" stroke-width=".6"/><path d="M6 4L8 14" stroke="#ccc" stroke-width=".6"/></svg>
<div class="a" style="left:712px;top:107px;width:0;height:0;border-left:2px solid transparent;border-right:2px solid transparent;border-top:3px solid #333"></div>
<svg style="left:721px;top:100px" width="15" height="15" viewBox="0 0 16 16"><path d="M8 1.5 L14.5 5 L8 8.5 L1.5 5Z" fill="#ccc" stroke="#555" stroke-width=".8"/><path d="M1.5 5 L8 8.5 L8 15 L1.5 11.5Z" fill="#aaa" stroke="#555" stroke-width=".8"/><path d="M14.5 5 L8 8.5 L8 15 L14.5 11.5Z" fill="#888" stroke="#555" stroke-width=".8"/></svg>
<div class="a" style="left:741px;top:107px;width:0;height:0;border-left:2px solid transparent;border-right:2px solid transparent;border-top:3px solid #333"></div>
<svg style="left:752px;top:100px" width="15" height="15" viewBox="0 0 16 16"><ellipse cx="7" cy="6" rx="6" ry="4" fill="#fff" stroke="#555"/><circle cx="7" cy="6" r="2" fill="#333"/><rect x="8" y="8" width="7" height="7" fill="#fff" stroke="#555" stroke-width=".8"/></svg>
<div class="a" style="left:772px;top:107px;width:0;height:0;border-left:2px solid transparent;border-right:2px solid transparent;border-top:3px solid #333"></div>
<svg style="left:781px;top:100px" width="15" height="15" viewBox="0 0 16 16"><path d="M8 1.5 L14.5 5 L8 8.5 L1.5 5Z" fill="#ddd" stroke="#444" stroke-width=".8"/><path d="M1.5 5 L8 8.5 L8 15 L1.5 11.5Z" fill="#bbb" stroke="#444" stroke-width=".8"/><path d="M14.5 5 L8 8.5 L8 15 L14.5 11.5Z" fill="#999" stroke="#444" stroke-width=".8"/><circle cx="12" cy="12" r="3.5" fill="#888" stroke="#444" stroke-width=".6"/></svg>
<div class="a" style="left:801px;top:107px;width:0;height:0;border-left:2px solid transparent;border-right:2px solid transparent;border-top:3px solid #333"></div>
<svg style="left:811px;top:100px" width="15" height="15" viewBox="0 0 16 16"><rect x="1" y="1" width="14" height="14" fill="#fff" stroke="#555" stroke-width=".8"/><path d="M1 3h14" stroke="#555" stroke-width=".6"/></svg>
<div class="a" style="left:831px;top:107px;width:0;height:0;border-left:2px solid transparent;border-right:2px solid transparent;border-top:3px solid #333"></div>
<div class="a" style="left:843px;top:99px;width:1px;height:16px;background:#e6e6e6;"></div>
<div class="a" style="left:884px;top:107px;width:0;height:0;border-left:2px solid transparent;border-right:2px solid transparent;border-top:3px solid #333"></div>
<div class="a" style="left:2px;top:117px;width:31px;height:555px;background:#fdfdfd;"></div>
<svg style="left:9px;top:121px" width="16" height="16" viewBox="0 0 16 16"><path d="M2 6l5-4 4 3v5l-5 4-4-3z" fill="#999" stroke="#444" stroke-width=".6"/><rect x="7" y="1" width="8" height="6" fill="#fff" stroke="#333" stroke-width=".8"/><path d="M8 10l5 5M13 10l-5 5" stroke="#333" stroke-width="1"/></svg>
<svg style="left:9px;top:143px" width="16" height="16" viewBox="0 0 16 16"><rect x="2" y="4" width="6" height="10" rx="1" fill="#4a78d0" stroke="#2a4a90" stroke-width=".6"/><path d="M8 9h6M11 6l3 3-3 3" fill="none" stroke="#e03030" stroke-width="1.2"/></svg>
<svg style="left:9px;top:163px" width="16" height="16" viewBox="0 0 16 16"><path d="M1 8l6-6 6 6v6H1z" fill="#bbb" stroke="#444" stroke-width=".7"/><rect x="8" y="8" width="7" height="7" fill="#fff" stroke="#333" stroke-width=".8"/></svg>
<svg style="left:9px;top:183px" width="16" height="16" viewBox="0 0 16 16"><path d="M2.5 4 V12 A5.5 2.5 0 0 0 13.5 12 V4" fill="#e6e6e6" stroke="#aaa" stroke-width=".8"/><ellipse cx="8" cy="4" rx="5.5" ry="2.5" fill="#f3f3f3" stroke="#aaa" stroke-width=".8"/><path d="M8 6v7M5 9.5h6" stroke="#aaa" stroke-width=".6"/></svg>
<svg style="left:9px;top:202px" width="16" height="16" viewBox="0 0 16 16"><path d="M2 14L14 2" stroke="#3d9fc4" stroke-width="1"/></svg>
<svg style="left:9px;top:223px" width="16" height="16" viewBox="0 0 16 16"><path d="M2 15C2 8 6 3 14 2" fill="none" stroke="#3d9fc4" stroke-width="1"/></svg>
<svg style="left:9px;top:241px" width="16" height="16" viewBox="0 0 16 16"><circle cx="8" cy="8" r="6" fill="none" stroke="#803050" stroke-width="1.1"/><path d="M8 8l3-3" stroke="#803050" stroke-width="1"/><circle cx="8" cy="8" r="1" fill="#803050"/></svg>
<svg style="left:9px;top:261px" width="16" height="16" viewBox="0 0 16 16"><circle cx="6" cy="6" r="4" fill="none" stroke="#3d9fc4" stroke-width="1"/><path d="M6 14L15 5" stroke="#3d9fc4" stroke-width="1"/></svg>
<svg style="left:9px;top:281px" width="16" height="16" viewBox="0 0 16 16"><path d="M2 14L14 2" stroke="#3a8fb5" stroke-width="1"/><circle cx="2.5" cy="13.5" r="1.5" fill="#e08030"/><circle cx="13.5" cy="2.5" r="1.5" fill="#a06030"/></svg>
<svg style="left:9px;top:301px" width="16" height="16" viewBox="0 0 16 16"><path d="M8 2v12M2 8h12" stroke="#3d9fc4" stroke-width="1"/></svg>
<svg style="left:9px;top:320px" width="16" height="16" viewBox="0 0 16 16"><path d="M2 14C5 8 8 10 10 6S13 3 14 2" fill="none" stroke="#3d9fc4" stroke-width="1"/></svg>
<svg style="left:9px;top:341px" width="16" height="16" viewBox="0 0 16 16"><path d="M2 12C6 15 12 14 12 8S10 3 9 2" fill="none" stroke="#e0a070" stroke-width="1"/><path d="M2 12C5 13 9 13 11 10" fill="none" stroke="#3a8fb5" stroke-width=".8"/></svg>
<svg style="left:9px;top:359px" width="16" height="16" viewBox="0 0 16 16"><path d="M2 14C4 9 7 12 10 7S13 3 14 2" fill="none" stroke="#e0a070" stroke-width="1"/><path d="M3 13C6 10 9 10 13 4" fill="none" stroke="#3a8fb5" stroke-width=".6"/></svg>
<svg style="left:9px;top:378px" width="16" height="16" viewBox="0 0 16 16"><path d="M2 8h12M5 4l6 8" stroke="#3d9fc4" stroke-width="1"/></svg>
<svg style="left:9px;top:399px" width="16" height="16" viewBox="0 0 16 16"><path d="M2 14h12M2 14L8 2" stroke="#e0a070" stroke-width="1"/><circle cx="9" cy="9" r="3.5" fill="none" stroke="#3a8fb5" stroke-width="1"/></svg>
<svg style="left:9px;top:420px" width="16" height="16" viewBox="0 0 16 16"><path d="M2 2h7l5 5v7H2z" fill="#fde8c8" stroke="#3a8fb5" stroke-width="1"/><path d="M6 6h3l2 2v2H6z" fill="#fff" stroke="#e0a070" stroke-width=".8"/></svg>
<svg style="left:9px;top:440px" width="16" height="16" viewBox="0 0 16 16"><ellipse cx="8" cy="8" rx="6.5" ry="4.5" transform="rotate(-40 8 8)" fill="none" stroke="#c09080" stroke-width="1.1"/><ellipse cx="8" cy="8" rx="4" ry="2.5" transform="rotate(-40 8 8)" fill="none" stroke="#3a8fb5" stroke-width=".6"/></svg>
<svg style="left:9px;top:459px" width="16" height="16" viewBox="0 0 16 16"><path d="M2 5C6 2 10 2 14 4L11 14C8 12 5 12 2 13z" fill="#f5e0d0" stroke="#777" stroke-width=".8"/><path d="M2 5C6 2 10 2 14 4" fill="none" stroke="#3a8fb5" stroke-width="1.2"/></svg>
<svg style="left:9px;top:478px" width="16" height="16" viewBox="0 0 16 16"><path d="M2 6L8 2 14 6 10 14 4 12z" fill="#e0f0f0" stroke="#3a8fb5" stroke-width="1"/></svg>
<svg style="left:9px;top:498px" width="16" height="16" viewBox="0 0 16 16"><path d="M2 10L8 3 14 6 8 14z" fill="#a8c8c8" stroke="#333" stroke-width="1"/></svg>
<svg style="left:9px;top:518px" width="16" height="16" viewBox="0 0 16 16"><path d="M2 8L8 3 14 7 8 13z" fill="#e8c0d8" stroke="#557" stroke-width=".8"/><path d="M4 8l8-3" stroke="#a04080" stroke-width="1"/></svg>
<svg style="left:9px;top:538px" width="16" height="16" viewBox="0 0 16 16"><ellipse cx="8" cy="8" rx="6.5" ry="5" fill="#bde" stroke="#557" stroke-width=".8"/><ellipse cx="8" cy="8" rx="3" ry="2" fill="#fff" stroke="#557" stroke-width=".6"/></svg>
<svg style="left:9px;top:558px" width="16" height="16" viewBox="0 0 16 16"><path d="M2.5 4 V12 A5.5 2.5 0 0 0 13.5 12 V4" fill="#aaa" stroke="#333" stroke-width=".8"/><ellipse cx="8" cy="4" rx="5.5" ry="2.5" fill="#ddd" stroke="#333" stroke-width=".8"/><path d="M10 5l5-4M12 2l3 3" stroke="#e0a040" stroke-width="1.1"/></svg>
<svg style="left:9px;top:577px" width="16" height="16" viewBox="0 0 16 16"><path d="M8 1v14M2 9C5 6 10 12 14 8" fill="none" stroke="#3d9fc4" stroke-width="1"/></svg>
<svg style="left:9px;top:596px" width="16" height="16" viewBox="0 0 16 16"><path d="M2 2l12 12M14 2L2 14" stroke="#3d9fc4" stroke-width="1"/></svg>
<svg style="left:3px;top:615px" width="13" height="13" viewBox="0 0 16 16"><path d="M1 12V7a7 5 0 0 1 14 0v5" fill="#cde" stroke="#335" stroke-width="1"/><rect x="4" y="8" width="8" height="5" fill="#fff" stroke="#335" stroke-width=".7"/></svg>
<svg style="left:18px;top:615px" width="13" height="13" viewBox="0 0 16 16"><path d="M2 10L9 2 14 5 7 14z" fill="#3a8fb5" stroke="#335" stroke-width=".7"/></svg>
<svg style="left:3px;top:631px" width="13" height="13" viewBox="0 0 16 16"><path d="M2 8a6 6 0 0 0 12 0z" fill="#dde" stroke="#557" stroke-width="1"/><path d="M9 1v6" stroke="#e08030"/></svg>
<svg style="left:18px;top:631px" width="13" height="13" viewBox="0 0 16 16"><path d="M3 14L10 4M6 2l8 8" stroke="#3a8fb5" stroke-width="1.6"/><path d="M10 10l4 4" stroke="#e08030" stroke-width="1.6"/></svg>
<div class="a" style="left:7px;top:666px;width:2px;height:2px;background:#333;"></div>
<div class="a" style="left:33px;top:117px;width:481px;height:16px;background:#fff;"></div>
<div class="a" style="left:100px;top:131px;width:414px;height:2px;background:#d4ecf6;"></div>
<div class="a" style="left:33px;top:118px;width:67px;height:15px;background:#0e6f98;"></div>
<svg style="left:36px;top:120px" width="10" height="10" viewBox="0 0 16 16"><path d="M1 13L8 2 15 13z" fill="#9fb8c8" stroke="#dde" stroke-width=".7"/><circle cx="8" cy="10" r="2.5" fill="#c06060"/></svg>
<div class="a t" style="left:48px;top:119.5px;font-size:8.5px;line-height:10.5px;color:#d6ecf7;">49-1.prt</div>
<svg style="left:82px;top:122px" width="6" height="8" viewBox="0 0 6 8"><path d="M0.5 0.5h3.5l1.5 1.5v5.5h-5z" fill="none" stroke="#dff" stroke-width="1"/><path d="M2 4h2" stroke="#dff" stroke-width=".8"/></svg>
<svg style="left:92px;top:123px" width="5" height="6" viewBox="0 0 5 6"><path d="M0.5 0.5L4.5 5.5M4.5 0.5L0.5 5.5" stroke="#fff" stroke-width="1.3"/></svg>
<div class="a" style="left:33px;top:133px;width:482px;height:539px;overflow:hidden;background:linear-gradient(#030303 0%,#101010 10%,#222 24.7%,#3a3a3a 37%,#555 49.5%,#6c6c6c 65%,#7b7b7b 79%,#7f7f7f 90%,#808080 100%)">
<svg style="left:-33px;top:-133px" width="896" height="720" viewBox="0 0 896 720">
<defs>
<linearGradient id="rg" x1="0" y1="0" x2="0" y2="1"><stop offset="0" stop-color="#c4554b"/><stop offset="1" stop-color="#da695e"/></linearGradient>
<linearGradient id="pg" x1="0" y1="0" x2="1" y2="0"><stop offset="0" stop-color="#e4a8a0"/><stop offset=".5" stop-color="#dea098"/><stop offset="1" stop-color="#d99890"/></linearGradient>
</defs>
<rect x="109.5" y="281.5" width="289" height="3" fill="#2a1f1f" opacity=".6"/><linearGradient id="sg" x1="0" y1="0" x2="0" y2="1"><stop offset="0" stop-color="#2a2020" stop-opacity=".55"/><stop offset="1" stop-color="#2a2020" stop-opacity="0"/></linearGradient><rect x="109.5" y="281.5" width="2" height="262" fill="url(#sg)"/>
<rect x="111" y="284" width="287" height="259" fill="url(#rg)"/>
<rect x="391" y="284" width="7" height="259" fill="#e06a50" opacity=".55"/>
<path d="M176 379 C195 378 205 377 215 375 C245 370 265 364 285 358 C310 350 330 345 355 344 L392 343 L392 452 L310 453 C299 455 293 462 292 470 L291 483 L137 481 Z" fill="url(#pg)"/>
<path d="M137 481 L291 483 L291 486 L136 484Z" fill="#8a4a45" opacity=".7"/>
<path d="M174 391 C195 390 205 389 215 387 C245 382 265 376 285 370 C310 362 330 357 355 356 L392 355 L392 343 L355 344 C330 345 310 350 285 358 C265 364 245 370 215 375 C205 377 195 378 176 379Z" fill="#eab4ac" opacity=".75"/>
<g fill="none" stroke="#7a4a48" stroke-width=".6" opacity=".8"><path d="M173.2 387.0 C195 386 205 385 215 383 C245 378 265 372 285 366 C310 358 330 353 355 352 L380 352"/><path d="M171.8 391.0 C195 390 205 389 215 387 C245 382 265 376 285 370 C310 362 330 357 355 356 L380 356"/><path d="M169.3 398.0 C195 397 205 396 215 394 C245 389 265 383 285 377 C310 369 330 364 355 363 L380 363"/><path d="M146 449 C200 449 250 446 285 432 C312 420 330 410 355 404 L380 401"/>
<path d="M143 457 C200 457 255 454 292 440 C318 428 338 418 362 411 L380 408"/>
<path d="M150 468 C210 468 262 462 296 450 C322 438 342 426 365 419 L380 417"/>
<path d="M138 477 C200 477 255 472 290 463 C310 456 330 438 360 430 L380 428"/>
<path d="M210 377 L210 482"/>
<path d="M282 358 L282 376"/>
<path d="M379 343 L379 452"/>
<path d="M341 425 L341 452"/>
</g>
<path d="M243 423 L325 393.5" stroke="#d5605a" stroke-width="22" stroke-linecap="round"/>
<path d="M113 490 L150 370 C153 362 160 356 168 355 L269 338 C290 334 300 322 314 320" fill="none" stroke="#a535a8" stroke-width="1.3"/>
<path d="M114 487 L150 370" fill="none" stroke="#b090c8" stroke-width="1.1"/>
<path d="M314 320 L398 320" fill="none" stroke="#d88aa8" stroke-width="1"/>
<path d="M398 320 C408 320 414 328 414.5 340" fill="none" stroke="#2828d8" stroke-width="2"/>
<path d="M414.5 340 L414.5 450" fill="none" stroke="#78a8e0" stroke-width="1.3"/>
<path d="M414.5 450 C414 462 408 471 398 472" fill="none" stroke="#2828d8" stroke-width="2"/>
<path d="M398 472 L315 475" fill="none" stroke="#d88aa8" stroke-width="1"/>
<path d="M315 475 C311 478 311.5 485 311.5 492 C311 500 305 506 297 506 L136 507.5 C122 507.5 113 500 113 490" fill="none" stroke="#a535a8" stroke-width="1.4"/>
<g stroke="#b8c8f0" stroke-width="1" opacity=".8">
<path d="M180 352 l3 2M220 346 l3 2M260 340 l3 2M300 326 l3 2M350 318 l3 2"/>
<path d="M412 392 l4 -2M412 448 l5 3M416 330 l-2 -4"/>
</g>
<circle cx="167" cy="355" r="2" fill="#b0c0e0"/>
<g fill="none" stroke="#3a2a2a" stroke-width=".9">
<circle cx="313" cy="333" r="5.5"/>
<path d="M313 324 V342 M304 333 H322"/>
</g>
<rect x="84" y="593" width="27" height="27" fill="none" stroke="#b4b4b4" stroke-width=".9"/>
<circle cx="97" cy="607" r="4.2" fill="#8090d0" opacity=".6"/>
<circle cx="97" cy="607" r="2.8" fill="#1830e0"/>
<path d="M97 593 V574" stroke="#3aa03a" stroke-width="2.6"/>
<path d="M94 575 L97 561 L100 575Z" fill="#3aa03a"/>
<path d="M111 607 H131" stroke="#d03030" stroke-width="2.6"/>
<path d="M130 604 L140 607 L130 610Z" fill="#d03030"/>
<text x="144" y="610" font-size="7" fill="#c08080" font-family="Liberation Sans">X</text>
<text x="95" y="558" font-size="6" fill="#80a080" font-family="Liberation Sans">Y</text>
</svg>
</div>
<div class="a" style="left:515px;top:117px;width:22px;height:555px;background:#fdfdfd;"></div>
<div class="a" style="left:519px;top:664px;width:0;height:0;border-top:2.5px solid transparent;border-bottom:2.5px solid transparent;border-right:3px solid #222"></div>
<div class="a" style="left:537px;top:117px;width:1px;height:555px;background:#e2e2e2;"></div>
<svg style="left:519px;top:125px" width="14" height="14" viewBox="0 0 16 16"><rect x="5" y="1" width="6" height="14" rx="2" fill="#bbb" stroke="#666" stroke-width=".7"/><path d="M5 4h6M5 7h6M5 10h6" stroke="#777" stroke-width=".7"/></svg>
<svg style="left:519px;top:144px" width="14" height="14" viewBox="0 0 16 16"><path d="M8 1.5 L14.5 5 L8 8.5 L1.5 5Z" fill="#eee" stroke="#555" stroke-width=".8"/><path d="M1.5 5 L8 8.5 L8 15 L1.5 11.5Z" fill="#ccc" stroke="#555" stroke-width=".8"/><path d="M14.5 5 L8 8.5 L8 15 L14.5 11.5Z" fill="#aaa" stroke="#555" stroke-width=".8"/></svg>
<svg style="left:519px;top:163px" width="14" height="14" viewBox="0 0 16 16"><path d="M2.5 4 V12 A5.5 2.5 0 0 0 13.5 12 V4" fill="#e4e4e4" stroke="#777" stroke-width=".8"/><ellipse cx="8" cy="4" rx="5.5" ry="2.5" fill="#f2f2f2" stroke="#777" stroke-width=".8"/></svg>
<svg style="left:519px;top:183px" width="14" height="14" viewBox="0 0 16 16"><path d="M8 1L2 13A6 2.5 0 0 0 14 13z" fill="#ddd" stroke="#777" stroke-width=".7"/></svg>
<svg style="left:519px;top:202px" width="14" height="14" viewBox="0 0 16 16"><circle cx="8" cy="8" r="6.5" fill="#d8d8d8" stroke="#777" stroke-width=".7"/><circle cx="6" cy="6" r="2.5" fill="#f2f2f2"/></svg>
<svg style="left:519px;top:222px" width="14" height="14" viewBox="0 0 16 16"><ellipse cx="8" cy="9" rx="7" ry="4" fill="#999" stroke="#555" stroke-width=".6"/><ellipse cx="8" cy="8" rx="3.5" ry="1.6" fill="#eee"/></svg>
<svg style="left:519px;top:241px" width="14" height="14" viewBox="0 0 16 16"><path d="M8 1.5 L14.5 5 L8 8.5 L1.5 5Z" fill="#f0962a" stroke="#666" stroke-width=".8"/><path d="M1.5 5 L8 8.5 L8 15 L1.5 11.5Z" fill="#f4b060" stroke="#666" stroke-width=".8"/><path d="M14.5 5 L8 8.5 L8 15 L14.5 11.5Z" fill="#ccc" stroke="#666" stroke-width=".8"/></svg>
<svg style="left:519px;top:261px" width="14" height="14" viewBox="0 0 16 16"><path d="M8 1.5 L14.5 5 L8 8.5 L1.5 5Z" fill="#fff" stroke="#666" stroke-width=".8"/><path d="M1.5 5 L8 8.5 L8 15 L1.5 11.5Z" fill="#f0962a" stroke="#666" stroke-width=".8"/><path d="M14.5 5 L8 8.5 L8 15 L14.5 11.5Z" fill="#ddd" stroke="#666" stroke-width=".8"/></svg>
<svg style="left:519px;top:280px" width="14" height="14" viewBox="0 0 16 16"><path d="M8 1.5L14.5 5V11.5L8 15 1.5 11.5V5z" fill="#f0962a" stroke="#b06010" stroke-width=".8"/><path d="M8 4l4 2.5v4L8 13 4 10.5v-4z" fill="#e07010"/></svg>
<svg style="left:519px;top:300px" width="14" height="14" viewBox="0 0 16 16"><path d="M8 1.5 L14.5 5 L8 8.5 L1.5 5Z" fill="#eee" stroke="#555" stroke-width=".8"/><path d="M1.5 5 L8 8.5 L8 15 L1.5 11.5Z" fill="#ccc" stroke="#555" stroke-width=".8"/><path d="M14.5 5 L8 8.5 L8 15 L14.5 11.5Z" fill="#aaa" stroke="#555" stroke-width=".8"/><path d="M11 11l4 4M15 11l-4 4" stroke="#333" stroke-width=".8"/></svg>
<svg style="left:519px;top:323px" width="14" height="14" viewBox="0 0 16 16"><path d="M1 12L8 2 15 8 9 15z" fill="#ccc" stroke="#555" stroke-width=".7"/><path d="M8 2L9 15" stroke="#777" stroke-width=".6"/><path d="M10 10l4 4h-4z" fill="none" stroke="#333" stroke-width=".7"/></svg>
<svg style="left:519px;top:341px" width="14" height="14" viewBox="0 0 16 16"><path d="M8 1.5 L14.5 5 L8 8.5 L1.5 5Z" fill="#eee" stroke="#555" stroke-width=".8"/><path d="M1.5 5 L8 8.5 L8 15 L1.5 11.5Z" fill="#ccc" stroke="#555" stroke-width=".8"/><path d="M14.5 5 L8 8.5 L8 15 L14.5 11.5Z" fill="#aaa" stroke="#555" stroke-width=".8"/><rect x="9" y="8" width="6" height="8" fill="#fff" stroke="#333" stroke-width=".7"/></svg>
<svg style="left:519px;top:361px" width="14" height="14" viewBox="0 0 16 16"><path d="M8 1.5 L14.5 5 L8 8.5 L1.5 5Z" fill="#f0962a" stroke="#666" stroke-width=".8"/><path d="M1.5 5 L8 8.5 L8 15 L1.5 11.5Z" fill="#f4b060" stroke="#666" stroke-width=".8"/><path d="M14.5 5 L8 8.5 L8 15 L14.5 11.5Z" fill="#ccc" stroke="#666" stroke-width=".8"/><path d="M11 7L15.5 15H6.5z" fill="#fff" stroke="#333" stroke-width=".8"/></svg>
<svg style="left:519px;top:380px" width="14" height="14" viewBox="0 0 16 16"><path d="M8 1.5 L14.5 5 L8 8.5 L1.5 5Z" fill="#f0962a" stroke="#666" stroke-width=".8"/><path d="M1.5 5 L8 8.5 L8 15 L1.5 11.5Z" fill="#f4b060" stroke="#666" stroke-width=".8"/><path d="M14.5 5 L8 8.5 L8 15 L14.5 11.5Z" fill="#ccc" stroke="#666" stroke-width=".8"/><path d="M11 7L15.5 15H6.5z" fill="#fff" stroke="#333" stroke-width=".8"/></svg>
<svg style="left:519px;top:399px" width="14" height="14" viewBox="0 0 16 16"><path d="M2.5 4 V12 A5.5 2.5 0 0 0 13.5 12 V4" fill="#f0962a" stroke="#666" stroke-width=".8"/><ellipse cx="8" cy="4" rx="5.5" ry="2.5" fill="#f5b060" stroke="#666" stroke-width=".8"/><path d="M11 7L15.5 15H6.5z" fill="#fff" stroke="#333" stroke-width=".8"/></svg>
<svg style="left:519px;top:419px" width="14" height="14" viewBox="0 0 16 16"><rect x="2" y="1" width="12" height="14" fill="#fff" stroke="#555" stroke-width=".8"/><rect x="4" y="1" width="8" height="4" fill="none" stroke="#555" stroke-width=".7"/><path d="M4 9h8M4 12h8" stroke="#555" stroke-width=".7"/></svg>
<svg style="left:519px;top:438px" width="14" height="14" viewBox="0 0 16 16"><path d="M3 1H1v14h2M13 1h2v14h-2" fill="none" stroke="#e0a060" stroke-width=".9"/><ellipse cx="8" cy="8" rx="5" ry="3" fill="#fff" stroke="#333" stroke-width=".8"/><circle cx="8" cy="8" r="1.6" fill="#333"/></svg>
<svg style="left:519px;top:459px" width="14" height="14" viewBox="0 0 16 16"><ellipse cx="6" cy="6" rx="4.5" ry="2.8" fill="none" stroke="#444" stroke-width=".8"/><ellipse cx="10" cy="11" rx="4.5" ry="2.8" fill="none" stroke="#444" stroke-width=".8"/><circle cx="10" cy="11" r="1.3" fill="#333"/><path d="M2 15L14 1" stroke="#333" stroke-width="1"/></svg>
<svg style="left:519px;top:479px" width="14" height="14" viewBox="0 0 16 16"><path d="M7 1H3v4h4v4H3" fill="none" stroke="#555" stroke-width=".9"/><path d="M9 11a3 3 0 0 1 5-2M14 12a3 3 0 0 1-5 2" fill="none" stroke="#555" stroke-width=".9"/></svg>
<div class="a" style="left:517px;top:498px;width:18px;height:1px;background:#dddddd;"></div>
<div class="a" style="left:538px;top:117px;width:336px;height:555px;background:#fff;"></div>
<div class="a" style="left:545px;top:124px;width:8px;height:7px;background:#fff;border:1.2px solid #333"></div>
<div class="a t" style="left:559px;top:122px;font-size:8px;line-height:10px;color:#333;letter-spacing:-0.3px">部件导航器</div>
<div class="a" style="left:543px;top:135px;width:326px;height:472px;border:1px solid #e4e4e4;border-bottom:none;overflow:hidden">
<div class="a" style="left:0;top:0;width:326px;height:15px;background:linear-gradient(#f0f0f0,#e6e6e6)"></div>
<div class="a" style="left:0;top:26.55px;width:326px;height:1px;background:#f0f0f0"></div>
<div class="a" style="left:0;top:27.05px;width:326px;height:12.35px;background:#f4f4f4"></div>
<div class="a" style="left:0;top:38.90px;width:326px;height:1px;background:#f0f0f0"></div>
<div class="a" style="left:0;top:51.25px;width:326px;height:1px;background:#f0f0f0"></div>
<div class="a" style="left:0;top:51.75px;width:326px;height:12.35px;background:#f4f4f4"></div>
<div class="a" style="left:0;top:63.60px;width:326px;height:1px;background:#f0f0f0"></div>
<div class="a" style="left:0;top:75.95px;width:326px;height:1px;background:#f0f0f0"></div>
<div class="a" style="left:0;top:76.45px;width:326px;height:12.35px;background:#f4f4f4"></div>
<div class="a" style="left:0;top:88.30px;width:326px;height:1px;background:#f0f0f0"></div>
<div class="a" style="left:0;top:100.65px;width:326px;height:1px;background:#f0f0f0"></div>
<div class="a" style="left:0;top:101.15px;width:326px;height:12.35px;background:#f4f4f4"></div>
<div class="a" style="left:0;top:113.00px;width:326px;height:1px;background:#f0f0f0"></div>
<div class="a" style="left:0;top:125.35px;width:326px;height:1px;background:#f0f0f0"></div>
<div class="a" style="left:0;top:125.85px;width:326px;height:12.35px;background:#f4f4f4"></div>
<div class="a" style="left:0;top:137.70px;width:326px;height:1px;background:#f0f0f0"></div>
<div class="a" style="left:0;top:150.05px;width:326px;height:1px;background:#f0f0f0"></div>
<div class="a" style="left:0;top:150.55px;width:326px;height:12.35px;background:#f4f4f4"></div>
<div class="a" style="left:0;top:162.40px;width:326px;height:1px;background:#f0f0f0"></div>
<div class="a" style="left:0;top:174.75px;width:326px;height:1px;background:#f0f0f0"></div>
<div class="a" style="left:0;top:175.25px;width:326px;height:12.35px;background:#f4f4f4"></div>
<div class="a" style="left:0;top:187.10px;width:326px;height:1px;background:#f0f0f0"></div>
<div class="a" style="left:0;top:199.45px;width:326px;height:1px;background:#f0f0f0"></div>
<div class="a" style="left:0;top:199.95px;width:326px;height:12.35px;background:#f4f4f4"></div>
<div class="a" style="left:0;top:211.80px;width:326px;height:1px;background:#f0f0f0"></div>
<div class="a" style="left:0;top:224.15px;width:326px;height:1px;background:#f0f0f0"></div>
<div class="a" style="left:0;top:224.65px;width:326px;height:12.35px;background:#f4f4f4"></div>
<div class="a" style="left:0;top:236.50px;width:326px;height:1px;background:#f0f0f0"></div>
<div class="a" style="left:0;top:248.85px;width:326px;height:1px;background:#f0f0f0"></div>
<div class="a" style="left:0;top:249.35px;width:326px;height:12.35px;background:#f4f4f4"></div>
<div class="a" style="left:0;top:261.20px;width:326px;height:1px;background:#f0f0f0"></div>
<div class="a" style="left:0;top:273.55px;width:326px;height:1px;background:#f0f0f0"></div>
<div class="a" style="left:0;top:274.05px;width:326px;height:12.35px;background:#f4f4f4"></div>
<div class="a" style="left:0;top:285.90px;width:326px;height:1px;background:#f0f0f0"></div>
<div class="a" style="left:0;top:298.25px;width:326px;height:1px;background:#f0f0f0"></div>
<div class="a" style="left:0;top:298.75px;width:326px;height:12.35px;background:#f4f4f4"></div>
<div class="a" style="left:0;top:310.60px;width:326px;height:1px;background:#f0f0f0"></div>
<div class="a" style="left:0;top:322.95px;width:326px;height:1px;background:#f0f0f0"></div>
<div class="a" style="left:0;top:323.45px;width:326px;height:12.35px;background:#f4f4f4"></div>
<div class="a" style="left:0;top:335.30px;width:326px;height:1px;background:#f0f0f0"></div>
<div class="a" style="left:0;top:347.65px;width:326px;height:1px;background:#f0f0f0"></div>
<div class="a" style="left:0;top:348.15px;width:326px;height:12.35px;background:#f4f4f4"></div>
<div class="a" style="left:0;top:360.00px;width:326px;height:1px;background:#f0f0f0"></div>
<div class="a" style="left:0;top:372.35px;width:326px;height:1px;background:#f0f0f0"></div>
<div class="a" style="left:0;top:372.85px;width:326px;height:12.35px;background:#f4f4f4"></div>
<div class="a" style="left:0;top:384.70px;width:326px;height:1px;background:#f0f0f0"></div>
<div class="a" style="left:0;top:397.05px;width:326px;height:1px;background:#f0f0f0"></div>
<div class="a" style="left:0;top:397.55px;width:326px;height:12.35px;background:#f4f4f4"></div>
<div class="a" style="left:0;top:409.40px;width:326px;height:1px;background:#f0f0f0"></div>
<div class="a" style="left:0;top:421.75px;width:326px;height:1px;background:#f0f0f0"></div>
<div class="a" style="left:0;top:422.25px;width:326px;height:12.35px;background:#f4f4f4"></div>
<div class="a" style="left:0;top:434.10px;width:326px;height:1px;background:#f0f0f0"></div>
<div class="a" style="left:0;top:446.45px;width:326px;height:1px;background:#f0f0f0"></div>
<div class="a" style="left:0;top:446.95px;width:326px;height:12.35px;background:#f4f4f4"></div>
<div class="a" style="left:0;top:458.80px;width:326px;height:1px;background:#f0f0f0"></div>
<div class="a" style="left:0;top:471.15px;width:326px;height:1px;background:#f0f0f0"></div>
<div class="a" style="left:124px;top:0;width:1px;height:472px;background:#ebebeb"></div>
<div class="a" style="left:139px;top:0;width:1px;height:472px;background:#ebebeb"></div>
<div class="a" style="left:154px;top:0;width:1px;height:472px;background:#ebebeb"></div>
<div class="a" style="left:216px;top:0;width:1px;height:472px;background:#ebebeb"></div>
</div>
<div class="a" style="left:543px;top:606px;width:326px;height:3px;background:#cacaca;"></div>
<div class="a t" style="left:548px;top:137px;font-size:8px;line-height:10px;color:#333;">名称</div>
<div class="a" style="left:574px;top:140px;width:0;height:0;border-left:3px solid transparent;border-right:3px solid transparent;border-bottom:4px solid #222"></div>
<div class="a t" style="left:669px;top:137px;font-size:8px;line-height:10px;color:#333;">当</div>
<div class="a t" style="left:684px;top:137px;font-size:8px;line-height:10px;color:#333;">最</div>
<div class="a t" style="left:699px;top:137px;font-size:8px;line-height:10px;color:#333;">附注</div>
<div class="a" style="left:549.5px;top:155.375px;width:1.5px;height:1.5px;background:#555;"></div>
<div class="a" style="left:549.5px;top:167.725px;width:1.5px;height:1.5px;background:#555;"></div>
<div class="a" style="left:549.5px;top:180.075px;width:1.5px;height:1.5px;background:#555;"></div>
<div class="a" style="left:549.5px;top:192.425px;width:1.5px;height:1.5px;background:#555;"></div>
<div class="a" style="left:548px;top:204.775px;width:4px;height:1px;background:#555;"></div>
<svg style="left:557px;top:151px" width="10" height="10" viewBox="0 0 16 16"><rect x="1" y="1" width="14" height="14" fill="#fff" stroke="#444" stroke-width="1.2"/><path d="M1 4h14" stroke="#444"/><path d="M5 12l3-5 3 5z" fill="#777"/></svg>
<div class="a t" style="left:568px;top:151.375px;font-size:8px;line-height:10px;color:#222;letter-spacing:-0.1px;-webkit-text-stroke:.05px currentColor;">模型视图</div>
<svg style="left:556px;top:163px" width="10" height="10" viewBox="0 0 16 16"><path d="M1 8l4 5 9-11" fill="none" stroke="#40b040" stroke-width="2"/></svg>
<svg style="left:566px;top:163px" width="10" height="10" viewBox="0 0 16 16"><rect x="2" y="6" width="10" height="8" fill="#f0b060" stroke="#a06020" stroke-width=".8"/><path d="M8 2l6 4-6 3z" fill="#e0a040"/></svg>
<div class="a t" style="left:578px;top:163.725px;font-size:8px;line-height:10px;color:#222;letter-spacing:-0.1px;-webkit-text-stroke:.05px currentColor;">摄像机</div>
<svg style="left:557px;top:176px" width="10" height="10" viewBox="0 0 16 16"><rect x="1.5" y="1.5" width="13" height="13" fill="none" stroke="#333" stroke-width="1.3"/></svg>
<div class="a t" style="left:568px;top:176.075px;font-size:8px;line-height:10px;color:#222;letter-spacing:-0.1px;-webkit-text-stroke:.05px currentColor;">组</div>
<svg style="left:557px;top:188px" width="10" height="10" viewBox="0 0 16 16"><path d="M1 3h5l1 2h8v9H1z" fill="#fff" stroke="#444" stroke-width="1.1"/></svg>
<div class="a t" style="left:568px;top:188.425px;font-size:8px;line-height:10px;color:#222;letter-spacing:-0.1px;-webkit-text-stroke:.05px currentColor;">非时间戳记几何体</div>
<svg style="left:556px;top:200px" width="10" height="10" viewBox="0 0 16 16"><circle cx="8" cy="8" r="6.5" fill="#30b030" stroke="#206020" stroke-width=".8"/><circle cx="6" cy="5.5" r="2.5" fill="#a0f0a0"/></svg>
<svg style="left:566px;top:200px" width="10" height="10" viewBox="0 0 16 16"><rect x="2" y="2" width="12" height="12" fill="#f5d0a0" stroke="#a07040" stroke-width=".8"/><path d="M4 10l4-6 4 6z" fill="#e08020"/></svg>
<div class="a t" style="left:578px;top:200.775px;font-size:8px;line-height:10px;color:#222;letter-spacing:-0.1px;-webkit-text-stroke:.05px currentColor;">模型历史记录</div>
<div class="a" style="left:561.5px;top:210.275px;width:1px;height:56.74999999999997px;background:#c8c8c8;"></div>
<div class="a" style="left:562px;top:217.625px;width:6px;height:1px;background:#c8c8c8;"></div>
<div class="a" style="left:562px;top:229.975px;width:6px;height:1px;background:#c8c8c8;"></div>
<div class="a" style="left:562px;top:242.325px;width:6px;height:1px;background:#c8c8c8;"></div>
<div class="a" style="left:562px;top:254.675px;width:6px;height:1px;background:#c8c8c8;"></div>
<div class="a" style="left:562px;top:267.025px;width:6px;height:1px;background:#c8c8c8;"></div>
<svg style="left:568px;top:213px" width="10" height="10" viewBox="0 0 16 16"><ellipse cx="8" cy="8" rx="6.5" ry="4.5" fill="#eee" stroke="#333" stroke-width="1.6"/><circle cx="8" cy="8" r="2.6" fill="#111"/><path d="M2 14L14 2" stroke="#333" stroke-width="1.2"/></svg>
<svg style="left:579px;top:213px" width="10" height="10" viewBox="0 0 16 16"><path d="M8 2v7M8 9l-6 5M8 9l6 5" stroke="#c06060" stroke-width="1.1"/><circle cx="8" cy="9" r="3.5" fill="none" stroke="#d08080"/></svg>
<div class="a t" style="left:589px;top:213.125px;font-size:8px;line-height:10px;color:#aaa;letter-spacing:-0.1px;-webkit-text-stroke:.05px currentColor;">基准坐标系 (0)</div>
<svg style="left:568px;top:225px" width="10" height="10" viewBox="0 0 16 16"><ellipse cx="8" cy="8" rx="6.5" ry="4.5" fill="#eee" stroke="#333" stroke-width="1.6"/><circle cx="8" cy="8" r="2.6" fill="#111"/></svg>
<svg style="left:579px;top:225px" width="10" height="10" viewBox="0 0 16 16"><circle cx="6" cy="6" r="5" fill="#d03040"/><path d="M7 9l4-3 4 3v5l-4 2-4-2z" fill="#4070d0" stroke="#224" stroke-width=".6"/></svg>
<div class="a t" style="left:589px;top:225.475px;font-size:8px;line-height:10px;color:#222;letter-spacing:-0.1px;-webkit-text-stroke:.05px currentColor;">体 (1)</div>
<svg style="left:568px;top:237px" width="10" height="10" viewBox="0 0 16 16"><ellipse cx="8" cy="8" rx="6.5" ry="4.5" fill="#eee" stroke="#333" stroke-width="1.6"/><circle cx="8" cy="8" r="2.6" fill="#111"/></svg>
<svg style="left:579px;top:237px" width="10" height="10" viewBox="0 0 16 16"><ellipse cx="8" cy="9" rx="7" ry="5" fill="#f0b080" stroke="#a07050" stroke-width=".8"/><path d="M3 8h10M8 4v10" stroke="#a07050" stroke-width=".7"/></svg>
<div class="a t" style="left:589px;top:237.825px;font-size:8px;line-height:10px;color:#222;letter-spacing:-0.1px;-webkit-text-stroke:.05px currentColor;">包容体 (17)</div>
<svg style="left:568px;top:250px" width="10" height="10" viewBox="0 0 16 16"><ellipse cx="8" cy="8" rx="6.5" ry="4.5" fill="#eee" stroke="#333" stroke-width="1.6"/><circle cx="8" cy="8" r="2.6" fill="#111"/></svg>
<svg style="left:579px;top:250px" width="10" height="10" viewBox="0 0 16 16"><path d="M1 6l7-4 7 4v6l-7 4-7-4z" fill="#f0962a" stroke="#444" stroke-width=".7"/><path d="M8 8l7-3v7l-7 4z" fill="#fff" stroke="#444" stroke-width=".7"/><path d="M1 6l7 2v8" fill="none" stroke="#444" stroke-width=".6"/></svg>
<svg style="left:568px;top:262px" width="10" height="10" viewBox="0 0 16 16"><ellipse cx="8" cy="8" rx="6.5" ry="4.5" fill="#eee" stroke="#333" stroke-width="1.6"/><circle cx="8" cy="8" r="2.6" fill="#111"/></svg>
<svg style="left:579px;top:262px" width="10" height="10" viewBox="0 0 16 16"><path d="M1 6l7-4 7 4v6l-7 4-7-4z" fill="#f0962a" stroke="#444" stroke-width=".7"/><path d="M8 8l7-3v7l-7 4z" fill="#fff" stroke="#444" stroke-width=".7"/><path d="M1 6l7 2v8" fill="none" stroke="#444" stroke-width=".6"/></svg>
<div class="a t" style="left:589px;top:250.175px;font-size:8px;line-height:10px;color:#222;letter-spacing:-0.1px;-webkit-text-stroke:.05px currentColor;">偏置区域 (18)</div>
<div class="a t" style="left:589px;top:262.525px;font-size:8px;line-height:10px;color:#111;letter-spacing:-0.1px;-webkit-text-stroke:.05px currentColor;font-weight:bold;-webkit-text-stroke:0">偏置区域 (19)</div>
<svg style="left:672px;top:262px" width="10" height="10" viewBox="0 0 16 16"><rect x="5" y="1" width="6" height="14" fill="#d0a070" stroke="#705030" stroke-width=".8"/><path d="M5 5h6M5 9h6" stroke="#705030" stroke-width=".8"/></svg>
<svg style="left:685px;top:200px" width="10" height="10" viewBox="0 0 16 16"><path d="M1.5 8l4 5 9-11" fill="none" stroke="#3cb03c" stroke-width="1.8"/></svg>
<svg style="left:685px;top:212px" width="10" height="10" viewBox="0 0 16 16"><path d="M1.5 8l4 5 9-11" fill="none" stroke="#3cb03c" stroke-width="1.8"/></svg>
<svg style="left:685px;top:224px" width="10" height="10" viewBox="0 0 16 16"><path d="M1.5 8l4 5 9-11" fill="none" stroke="#3cb03c" stroke-width="1.8"/></svg>
<svg style="left:685px;top:237px" width="10" height="10" viewBox="0 0 16 16"><path d="M1.5 8l4 5 9-11" fill="none" stroke="#3cb03c" stroke-width="1.8"/></svg>
<svg style="left:685px;top:249px" width="10" height="10" viewBox="0 0 16 16"><path d="M1.5 8l4 5 9-11" fill="none" stroke="#3cb03c" stroke-width="1.8"/></svg>
<svg style="left:685px;top:262px" width="10" height="10" viewBox="0 0 16 16"><path d="M1.5 8l4 5 9-11" fill="none" stroke="#3cb03c" stroke-width="1.8"/></svg>
<div class="a" style="left:549px;top:614.7px;width:0;height:0;border-top:3px solid transparent;border-bottom:3px solid transparent;border-left:3px solid #222"></div>
<div class="a t" style="left:558px;top:612.7px;font-size:8.5px;line-height:10.5px;color:#2d6a8a;">搜索</div>
<div class="a" style="left:543px;top:623.7px;width:326px;height:1px;background:#d6d6d6;"></div>
<div class="a" style="left:549px;top:629.2px;width:0;height:0;border-top:3px solid transparent;border-bottom:3px solid transparent;border-left:3px solid #222"></div>
<div class="a t" style="left:558px;top:627.2px;font-size:8.5px;line-height:10.5px;color:#2d6a8a;">相关性</div>
<div class="a" style="left:543px;top:638.2px;width:326px;height:1px;background:#d6d6d6;"></div>
<div class="a" style="left:549px;top:643.8px;width:0;height:0;border-top:3px solid transparent;border-bottom:3px solid transparent;border-left:3px solid #222"></div>
<div class="a t" style="left:558px;top:641.8px;font-size:8.5px;line-height:10.5px;color:#2d6a8a;">细节</div>
<div class="a" style="left:543px;top:652.8px;width:326px;height:1px;background:#d6d6d6;"></div>
<div class="a" style="left:549px;top:658.5px;width:0;height:0;border-top:3px solid transparent;border-bottom:3px solid transparent;border-left:3px solid #222"></div>
<div class="a t" style="left:558px;top:656.5px;font-size:8.5px;line-height:10.5px;color:#2d6a8a;">预览</div>
<div class="a" style="left:543px;top:667.5px;width:326px;height:1px;background:#d6d6d6;"></div>
<div class="a" style="left:874px;top:117px;width:19px;height:555px;background:#dcdcdc;"></div>
<div class="a" style="left:872px;top:117px;width:2px;height:555px;background:#eeeeee;"></div>
<svg style="left:876px;top:119px" width="14" height="14" viewBox="0 0 16 16"><g transform="translate(8 8)"><circle r="4" fill="none" stroke="#333" stroke-width="1.8"/><g stroke="#333" stroke-width="1.6"><path d="M0 -6.5V-4M0 4V6.5M-6.5 0H-4M4 0H6.5M-4.6 -4.6L-3 -3M3 3L4.6 4.6M-4.6 4.6L-3 3M3 -3L4.6 -4.6"/></g><circle r="1.3" fill="#333"/></g></svg>
<svg style="left:876px;top:149px" width="14" height="14" viewBox="0 0 16 16"><polygon points="8.00,-1.42 11.12,0.38 8.00,2.18 4.88,0.38" fill="#eee" stroke="#555" stroke-width="0.7" stroke-linejoin="round"/><polygon points="11.12,0.38 8.00,2.18 8.00,10.10 11.12,8.30" fill="#c8c8c8" stroke="#555" stroke-width="0.7" stroke-linejoin="round"/><polygon points="4.88,0.38 8.00,2.18 8.00,10.10 4.88,8.30" fill="#f4f4f4" stroke="#555" stroke-width="0.7" stroke-linejoin="round"/><polygon points="11.12,4.34 14.24,6.14 11.12,7.94 8.00,6.14" fill="#eee" stroke="#555" stroke-width="0.7" stroke-linejoin="round"/><polygon points="14.24,6.14 11.12,7.94 11.12,11.90 14.24,10.10" fill="#c8c8c8" stroke="#555" stroke-width="0.7" stroke-linejoin="round"/><polygon points="8.00,6.14 11.12,7.94 11.12,11.90 8.00,10.10" fill="#f4f4f4" stroke="#555" stroke-width="0.7" stroke-linejoin="round"/></svg>
<div class="a" style="left:874px;top:170px;width:19px;height:24px;background:#c8c8c8;"></div>
<svg style="left:876px;top:175px" width="14" height="14" viewBox="0 0 16 16"><circle cx="5" cy="7" r="4" fill="#f08020"/><path d="M8 4l7 5-7 5zM15 4l-7 5 7 5z" fill="none" stroke="#333" stroke-width="1"/><rect x="1" y="5" width="6" height="9" fill="none" stroke="#5070a0" stroke-width=".8"/></svg>
<div class="a" style="left:874px;top:195px;width:19px;height:26px;background:#f6f6f6;"></div>
<svg style="left:876px;top:202px" width="14" height="14" viewBox="0 0 16 16"><path d="M1 12C1 6 5 2 9 3L8 9C11 8 14 10 15 13 10 15 5 15 1 12z" fill="#999" stroke="#444" stroke-width=".8"/></svg>
<div class="a" style="left:874px;top:222px;width:19px;height:26px;background:#d0d0d0;"></div>
<svg style="left:876px;top:227px" width="14" height="14" viewBox="0 0 16 16"><path d="M1 12C1 6 5 2 9 3L8 9C11 8 14 10 15 13 10 15 5 15 1 12z" fill="#aaa" stroke="#444" stroke-width=".8"/><path d="M10 2l4 4M14 2l-4 4" stroke="#e07020" stroke-width="1.2"/></svg>
<svg style="left:876px;top:253px" width="14" height="14" viewBox="0 0 16 16"><path d="M1 9l6-4 6 4-6 4z" fill="#eee" stroke="#444" stroke-width=".8"/><circle cx="12" cy="11" r="3.5" fill="#fff" stroke="#444" stroke-width=".9"/><path d="M5 2l3 3" stroke="#e07020"/></svg>
<svg style="left:876px;top:287px" width="14" height="14" viewBox="0 0 16 16"><circle cx="8" cy="8" r="6" fill="#888" stroke="#555" stroke-width=".6"/><text x="8" y="11" font-size="8" text-anchor="middle" fill="#ccc" font-family="Liberation Sans">?</text></svg>
<svg style="left:876px;top:321px" width="14" height="14" viewBox="0 0 16 16"><rect x="0.5" y="0.5" width="15" height="15" fill="#eee" stroke="#555" stroke-width=".9"/><circle cx="8" cy="8" r="5.5" fill="#3a90c0"/><path d="M3 8h10M8 3v10" stroke="#9cf" stroke-width=".6"/></svg>
<svg style="left:876px;top:353px" width="14" height="14" viewBox="0 0 16 16"><circle cx="8" cy="8" r="6.5" fill="#f4f4f4" stroke="#333" stroke-width="1"/><path d="M8 3v5h4" fill="none" stroke="#333" stroke-width="1"/></svg>
<svg style="left:876px;top:379px" width="14" height="14" viewBox="0 0 16 16"><rect x="2" y="1" width="6" height="4" fill="#f04040"/><rect x="2" y="5" width="6" height="4" fill="#f0e040"/><rect x="2" y="9" width="6" height="3" fill="#40c040"/><rect x="2" y="12" width="6" height="3" fill="#4060f0"/><path d="M8 6l6 9" stroke="#222" stroke-width="1.5"/></svg>
<svg style="left:876px;top:406px" width="14" height="14" viewBox="0 0 16 16"><path d="M2 15l4-12 3 12z" fill="#4a90d8"/><path d="M8 6l6 9M14 3L9 9" stroke="#222" stroke-width="1.3"/></svg>
<svg style="left:876px;top:431px" width="14" height="14" viewBox="0 0 16 16"><rect x="0.5" y="0.5" width="15" height="15" fill="#fff" stroke="#555" stroke-width=".9"/><path d="M3 3l10 10M13 3L3 13" stroke="#444" stroke-width="1.8"/></svg>
<div class="a" style="left:2px;top:672px;width:891px;height:30px;background:#fdfdfd;"></div>
<div class="a" style="left:2px;top:702px;width:891px;height:1px;background:#c4c4c4;"></div>
<div class="a" style="left:2px;top:703px;width:891px;height:13px;background:#fff;"></div>
<svg style="left:7px;top:680px" width="16" height="16" viewBox="0 0 16 16"><path d="M2 13L12 2l2 2L4 15z" fill="#fff" stroke="#555" stroke-width="1"/></svg>
<svg style="left:27px;top:680px" width="16" height="16" viewBox="0 0 16 16"><rect x="1" y="1" width="12" height="11" fill="#fff" stroke="#555" stroke-width=".9"/><path d="M1 3.5h12" stroke="#555" stroke-width=".7"/><circle cx="4.5" cy="7" r="1.3" fill="#e0a060"/><circle cx="9" cy="7" r="1.3" fill="#e0a060"/><path d="M8 15l7-7" stroke="#555" stroke-width="2"/></svg>
<svg style="left:47px;top:680px" width="16" height="16" viewBox="0 0 16 16"><rect x="1" y="1" width="12" height="11" fill="#fff" stroke="#555" stroke-width=".9"/><path d="M1 3.5h12" stroke="#555" stroke-width=".7"/><circle cx="4.5" cy="7" r="1.3" fill="#e0a060"/><circle cx="9" cy="7" r="1.3" fill="#e0a060"/><path d="M6 15a5 4 0 0 1 10 0z" fill="#fff" stroke="#555" stroke-width=".9"/></svg>
<svg style="left:69px;top:680px" width="16" height="16" viewBox="0 0 16 16"><path d="M1 8l4-6 7 1 1 7-5 4-6-2z" fill="#f0962a"/><rect x="7" y="8" width="8" height="7" fill="#fff" stroke="#333" stroke-width=".9"/><path d="M9 13l4-4" stroke="#333"/></svg>
<svg style="left:89px;top:680px" width="16" height="16" viewBox="0 0 16 16"><path d="M4 1v5M1.5 3.5h5" stroke="#3a90c0" stroke-width="1"/><circle cx="11" cy="11" r="4" fill="#fff" stroke="#444" stroke-width=".9"/><path d="M11 9v5" stroke="#444"/></svg>
<svg style="left:109px;top:680px" width="16" height="16" viewBox="0 0 16 16"><path d="M3 1v11l12 3" fill="none" stroke="#40a060" stroke-width=".8"/><path d="M5 9l5-3 5 3-5 3z" fill="#ccc" stroke="#444" stroke-width=".8"/><path d="M5 9v3l5 3 5-3V9" fill="#999" stroke="#444" stroke-width=".8"/></svg>
<svg style="left:129px;top:680px" width="16" height="16" viewBox="0 0 16 16"><path d="M3 1v11l12 3" fill="none" stroke="#40a060" stroke-width=".8"/><path d="M10 5v10M5 10h10M8 7l2-2 2 2M8 13l2 2 2-2" fill="none" stroke="#333" stroke-width="1"/></svg>
<svg style="left:148px;top:680px" width="16" height="16" viewBox="0 0 16 16"><path d="M7 9L2 1M7 9l7-6M7 9l6 6" stroke="#40a040" stroke-width="1"/><path d="M7 9l6 6" stroke="#d05050" stroke-width="1"/><circle cx="7" cy="9" r="1.5" fill="#e0a040"/></svg>
<svg style="left:169px;top:680px" width="16" height="16" viewBox="0 0 16 16"><path d="M8 1v8M8 9l-6 5M8 9l6 5" stroke="#c04060" stroke-width="1"/><circle cx="8" cy="9" r="5" fill="none" stroke="#d08090" stroke-width=".8"/></svg>
<svg style="left:191px;top:680px" width="16" height="16" viewBox="0 0 16 16"><path d="M3 1v11l12 3" fill="none" stroke="#d05070" stroke-width=".8"/><rect x="6" y="6" width="9" height="9" fill="#fff" stroke="#444" stroke-width=".9"/><rect x="8" y="6" width="5" height="3" fill="none" stroke="#444" stroke-width=".7"/></svg>
<svg style="left:210px;top:680px" width="16" height="16" viewBox="0 0 16 16"><path d="M3 1v11l12 3" fill="none" stroke="#d05070" stroke-width=".8"/><text x="5" y="6" font-size="5" fill="#333" font-family="Liberation Sans">[000]</text></svg>
<svg style="left:231px;top:680px" width="16" height="16" viewBox="0 0 16 16"><path d="M1 5l6-3 6 3-6 3z" fill="#eee" stroke="#444" stroke-width=".8"/><path d="M1 8l6 3 6-3M1 11l6 3 6-3" fill="none" stroke="#444" stroke-width=".8"/><rect x="9" y="8" width="6" height="7" fill="#fff" stroke="#333" stroke-width=".8"/></svg>
<svg style="left:251px;top:680px" width="16" height="16" viewBox="0 0 16 16"><path d="M1 5l6-3 6 3-6 3z" fill="#eee" stroke="#444" stroke-width=".8"/><path d="M1 8l6 3 6-3M1 11l6 3 6-3" fill="none" stroke="#444" stroke-width=".8"/><rect x="9" y="8" width="6" height="7" fill="#fff" stroke="#333" stroke-width=".8"/><path d="M10 14l4-4" stroke="#333"/></svg>
<svg style="left:272px;top:680px" width="16" height="16" viewBox="0 0 16 16"><path d="M1 5l6-3 6 3-6 3z" fill="#eee" stroke="#444" stroke-width=".8"/><path d="M1 8l6 3 6-3M1 11l6 3 6-3" fill="none" stroke="#444" stroke-width=".8"/><circle cx="12" cy="12" r="3.5" fill="#fff" stroke="#333" stroke-width="1.1"/></svg>
<svg style="left:292px;top:680px" width="16" height="16" viewBox="0 0 16 16"><circle cx="8" cy="8" r="6" fill="#e8c8a0" stroke="#a08060" stroke-width=".8"/><ellipse cx="8" cy="8" rx="6" ry="2.5" fill="none" stroke="#a08060" stroke-width=".7"/></svg>
<svg style="left:314px;top:680px" width="16" height="16" viewBox="0 0 16 16"><path d="M8 1.5 L14.5 5 L8 8.5 L1.5 5Z" fill="#f0f0f0" stroke="#666" stroke-width=".8"/><path d="M1.5 5 L8 8.5 L8 15 L1.5 11.5Z" fill="#d8d8d8" stroke="#666" stroke-width=".8"/><path d="M14.5 5 L8 8.5 L8 15 L14.5 11.5Z" fill="#bbb" stroke="#666" stroke-width=".8"/><path d="M3 6l5 3 5-3" fill="none" stroke="#e0a040" stroke-width=".6"/></svg>
<svg style="left:332px;top:680px" width="16" height="16" viewBox="0 0 16 16"><rect x="1" y="1" width="14" height="14" fill="#fff" stroke="#555" stroke-width=".9"/><rect x="4" y="4" width="8" height="8" fill="#f0962a"/></svg>
<svg style="left:354px;top:680px" width="16" height="16" viewBox="0 0 16 16"><path d="M8 1.5 L14.5 5 L8 8.5 L1.5 5Z" fill="#f0962a" stroke="#555" stroke-width=".8"/><path d="M1.5 5 L8 8.5 L8 15 L1.5 11.5Z" fill="#f4b060" stroke="#555" stroke-width=".8"/><path d="M14.5 5 L8 8.5 L8 15 L14.5 11.5Z" fill="#e8e8e8" stroke="#555" stroke-width=".8"/><rect x="9" y="7" width="6" height="8" fill="#fff" stroke="#333" stroke-width=".8"/></svg>
<svg style="left:374px;top:680px" width="16" height="16" viewBox="0 0 16 16"><path d="M1 7l7-4 7 4-7 4z" fill="#f0962a" stroke="#a05010" stroke-width=".6"/><path d="M1 10l7 4 7-4" fill="none" stroke="#a05010" stroke-width="1.2"/></svg>
<svg style="left:394px;top:680px" width="16" height="16" viewBox="0 0 16 16"><path d="M1 5l8-3 6 6-8 5z" fill="#fff" stroke="#555" stroke-width=".9"/><path d="M3 7l7-3 4 4-7 4z" fill="#f0962a" opacity=".8"/></svg>
<svg style="left:414px;top:680px" width="16" height="16" viewBox="0 0 16 16"><path d="M4 14L8 2h6L10 14z" fill="#f0962a" stroke="#a05010" stroke-width=".6"/><path d="M4 14L8 2" stroke="#555" stroke-width=".9"/></svg>
<svg style="left:434px;top:680px" width="16" height="16" viewBox="0 0 16 16"><path d="M1 6l6-4 8 8-6 4z" fill="#f0962a" stroke="#a05010" stroke-width=".6"/><path d="M1 6l8 8" stroke="#555" stroke-width=".8"/></svg>
<svg style="left:454px;top:680px" width="16" height="16" viewBox="0 0 16 16"><path d="M1 14C4 8 8 3 15 2 12 6 10 12 9 14z" fill="#aaa" stroke="#555" stroke-width=".7"/></svg>
<svg style="left:474px;top:680px" width="16" height="16" viewBox="0 0 16 16"><rect x="1" y="1" width="11" height="11" fill="#f0962a"/><path d="M12 8v8M8 12h8" stroke="#222" stroke-width="1.2"/></svg>
<svg style="left:495px;top:680px" width="16" height="16" viewBox="0 0 16 16"><path d="M8 9V2M8 9l-6 4M8 9l7 3" stroke="#3a70d0" stroke-width="1.2"/><rect x="6" y="8" width="4" height="4" fill="#3a70d0"/></svg>
<svg style="left:516px;top:680px" width="16" height="16" viewBox="0 0 16 16"><path d="M2 4l5-3 5 3-2 5-5 1z" fill="#c8b8a8" stroke="#555" stroke-width=".8"/><circle cx="8" cy="13" r="2" fill="#555"/><circle cx="13" cy="13" r="2" fill="#555"/></svg>
<svg style="left:536px;top:680px" width="16" height="16" viewBox="0 0 16 16"><path d="M8 1.5 L14.5 5 L8 8.5 L1.5 5Z" fill="#f0962a" stroke="#555" stroke-width=".8"/><path d="M1.5 5 L8 8.5 L8 15 L1.5 11.5Z" fill="#f4b060" stroke="#555" stroke-width=".8"/><path d="M14.5 5 L8 8.5 L8 15 L14.5 11.5Z" fill="#e8e8e8" stroke="#555" stroke-width=".8"/><rect x="9" y="7" width="6" height="8" fill="#fff" stroke="#333" stroke-width=".8"/></svg>
<svg style="left:558px;top:680px" width="16" height="16" viewBox="0 0 16 16"><path d="M1 3l7 4 7-4v10l-7-3-7 3z" fill="#fff" stroke="#555" stroke-width=".9"/><path d="M1 3l7 4v6l-7 0z" fill="#f0c090" opacity=".7"/></svg>
<svg style="left:577px;top:680px" width="16" height="16" viewBox="0 0 16 16"><path d="M1 10C4 4 10 2 15 5L12 14C8 12 4 12 1 10z" fill="#f4e8d8" stroke="#666" stroke-width=".9"/></svg>
<svg style="left:597px;top:680px" width="16" height="16" viewBox="0 0 16 16"><path d="M7 2L2 14h5z" fill="#203080"/><path d="M9 2v12h5z" fill="#c03030"/></svg>
<svg style="left:618px;top:680px" width="16" height="16" viewBox="0 0 16 16"><path d="M3 13L13 3" stroke="#7060c0" stroke-width="4" stroke-linecap="round"/><path d="M3 13L13 3" stroke="#fff" stroke-width="2" stroke-linecap="round"/></svg>
<svg style="left:639px;top:680px" width="16" height="16" viewBox="0 0 16 16"><path d="M4 2h8l2 4-6 3-6-3z" fill="#f0962a" stroke="#a05010" stroke-width=".6"/><circle cx="5" cy="11" r="3" fill="#fff" stroke="#444" stroke-width=".9"/><circle cx="11" cy="11" r="3" fill="#fff" stroke="#444" stroke-width=".9"/><circle cx="8" cy="13" r="2.5" fill="#fff" stroke="#444" stroke-width=".9"/></svg>
<svg style="left:658px;top:680px" width="16" height="16" viewBox="0 0 16 16"><path d="M8 1.5 L14.5 5 L8 8.5 L1.5 5Z" fill="#f0962a" stroke="#555" stroke-width=".8"/><path d="M1.5 5 L8 8.5 L8 15 L1.5 11.5Z" fill="#f4b060" stroke="#555" stroke-width=".8"/><path d="M14.5 5 L8 8.5 L8 15 L14.5 11.5Z" fill="#ddd" stroke="#555" stroke-width=".8"/><circle cx="12" cy="12" r="3.5" fill="#bbb" stroke="#333" stroke-width=".8"/></svg>
<svg style="left:678px;top:672px" width="12" height="12" viewBox="0 0 16 16"><path d="M2 6l6-4 6 4-6 4z" fill="#f0a050" stroke="#555" stroke-width=".8"/><path d="M5 10l3 4 3-4" fill="#ccc" stroke="#444" stroke-width=".8"/></svg>
<svg style="left:694px;top:672px" width="12" height="12" viewBox="0 0 16 16"><path d="M1 10C4 6 10 6 15 8L13 11C9 10 5 10 3 12z" fill="#e8f0f4" stroke="#4a8ab0" stroke-width=".9"/></svg>
<svg style="left:709px;top:672px" width="12" height="12" viewBox="0 0 16 16"><path d="M3 3h8l3 3v8H6L3 11z" fill="#f0a050" stroke="#705030" stroke-width=".9"/></svg>
<svg style="left:724px;top:672px" width="12" height="12" viewBox="0 0 16 16"><path d="M3 3h8l3 3v8H6L3 11z" fill="#e0a070" stroke="#705030" stroke-width=".9"/></svg>
<svg style="left:740px;top:672px" width="12" height="12" viewBox="0 0 16 16"><path d="M2 4l10-2 2 9-10 3z" fill="#cde8f4" stroke="#3a8ab8" stroke-width=".9"/></svg>
<svg style="left:756px;top:672px" width="12" height="12" viewBox="0 0 16 16"><path d="M3 8l5-5 5 5-5 5z" fill="#b0b0b0" stroke="#555" stroke-width=".8"/></svg>
<svg style="left:771px;top:672px" width="12" height="12" viewBox="0 0 16 16"><path d="M3 3h8l3 3v8H6L3 11z" fill="#e0a070" stroke="#705030" stroke-width=".9"/></svg>
<svg style="left:787px;top:672px" width="12" height="12" viewBox="0 0 16 16"><path d="M3 8l5-5 5 5-5 5z" fill="#c070c0" stroke="#555" stroke-width=".8"/></svg>
<svg style="left:802px;top:672px" width="12" height="12" viewBox="0 0 16 16"><path d="M3 8l5-5 5 5-5 5z" fill="#888" stroke="#555" stroke-width=".8"/></svg>
<svg style="left:678px;top:688px" width="12" height="12" viewBox="0 0 16 16"><path d="M1 10C4 6 10 6 15 8L13 11C9 10 5 10 3 12z" fill="#e8f4f8" stroke="#4a8ab0" stroke-width=".9"/></svg>
<svg style="left:694px;top:688px" width="12" height="12" viewBox="0 0 16 16"><path d="M2 4l10-2 2 9-10 3z" fill="#8ac8e0" stroke="#3a6a90" stroke-width=".9"/></svg>
<svg style="left:709px;top:688px" width="12" height="12" viewBox="0 0 16 16"><path d="M3 3h8l3 3v8H6L3 11z" fill="#f0a050" stroke="#705030" stroke-width=".9"/></svg>
<svg style="left:724px;top:688px" width="12" height="12" viewBox="0 0 16 16"><path d="M2 9C4 5 8 3 14 3L12 13C8 12 5 12 2 9z" fill="#c8c8c8" stroke="#555" stroke-width=".9"/></svg>
<svg style="left:740px;top:688px" width="12" height="12" viewBox="0 0 16 16"><path d="M2 4l10-2 2 9-10 3z" fill="#9ad0ea" stroke="#3a8ab8" stroke-width=".9"/></svg>
<svg style="left:756px;top:688px" width="12" height="12" viewBox="0 0 16 16"><circle cx="6" cy="6" r="4" fill="#fff" stroke="#6060c0" stroke-width="1"/><path d="M9 10l4 3" stroke="#8060c0" stroke-width="2"/></svg>
<svg style="left:771px;top:688px" width="12" height="12" viewBox="0 0 16 16"><path d="M3 3h8l3 3v8H6L3 11z" fill="#f09040" stroke="#705030" stroke-width=".9"/></svg>
<svg style="left:787px;top:688px" width="12" height="12" viewBox="0 0 16 16"><ellipse cx="8" cy="9" rx="6" ry="5" fill="#f08a30" stroke="#a05010" stroke-width=".7"/><path d="M2 8h12" stroke="#c06010" stroke-width="1"/></svg>
<svg style="left:802px;top:688px" width="12" height="12" viewBox="0 0 16 16"><path d="M2 10l8-7 4 3-8 8z" fill="#f0a030" stroke="#704010" stroke-width=".8"/><path d="M2 10l4 4" stroke="#333" stroke-width="1.2"/></svg>
<svg style="left:817px;top:688px" width="12" height="12" viewBox="0 0 16 16"><rect x="1" y="1" width="14" height="14" fill="#fff" stroke="#a03060" stroke-width="1.2"/><text x="8" y="11.5" font-size="8.5" text-anchor="middle" fill="#c02050" font-weight="bold" font-family="Liberation Sans">kg</text></svg>
<svg style="left:832px;top:688px" width="12" height="12" viewBox="0 0 16 16"><path d="M2 5h9l3-3v11H2z" fill="#fff" stroke="#444" stroke-width="1.3"/><circle cx="7" cy="9.5" r="2.5" fill="none" stroke="#444" stroke-width="1.1"/></svg>
<div class="a" style="left:861px;top:675px;width:1px;height:24px;background:#e8e8e8;"></div>
<div class="a" style="left:885px;top:694px;width:0;height:0;border-left:2px solid transparent;border-right:2px solid transparent;border-top:3px solid #333"></div>
<svg style="left:749px;top:655px" width="44" height="42" viewBox="0 0 44 42"><g opacity=".88"><g transform="translate(20,20)">
<circle r="13" fill="none" stroke="#3a3a3a" stroke-width="5"/>
<g fill="#3a3a3a">
<rect x="-3" y="-19" width="6" height="6"/><rect x="-3" y="13" width="6" height="6"/>
<rect x="-19" y="-3" width="6" height="6"/><rect x="13" y="-3" width="6" height="6"/>
<rect x="-3" y="-19" width="6" height="6" transform="rotate(45)"/><rect x="-3" y="13" width="6" height="6" transform="rotate(45)"/>
<rect x="-19" y="-3" width="6" height="6" transform="rotate(45)"/><rect x="13" y="-3" width="6" height="6" transform="rotate(45)"/>
</g></g>
<path d="M30 14 L9 36" stroke="#555" stroke-width="6" stroke-linecap="round"/>
<path d="M30 14 L9 36" stroke="#fff" stroke-width="3.8" stroke-linecap="round"/>
<path d="M36 2 A7 7 0 1 0 41 10 L37 11 L34 8 Z" fill="#fff" stroke="#555" stroke-width="1.1"/>
<circle cx="9" cy="36" r="4.2" fill="#fff" stroke="#555" stroke-width="1"/></g></svg>
<div class="a t" style="left:793px;top:662px;font-size:14px;line-height:16px;color:#161616;font-weight:bold;letter-spacing:-0.1px;line-height:16px;-webkit-text-stroke:0">机械资源网</div>
<div class="a t" style="left:794px;top:677px;font-size:9.5px;line-height:11.5px;color:rgba(120,120,120,0.55);letter-spacing:0.2px;line-height:12px;-webkit-text-stroke:0">www.ii557.com</div>
<div class="a" style="left:0px;top:38px;width:2px;height:682px;background:#0e6f98;"></div>
<div class="a" style="left:893px;top:38px;width:3px;height:682px;background:#0e6f98;"></div>
<div class="a" style="left:0px;top:716px;width:896px;height:4px;background:#0e6f98;"></div>
</body></html>
